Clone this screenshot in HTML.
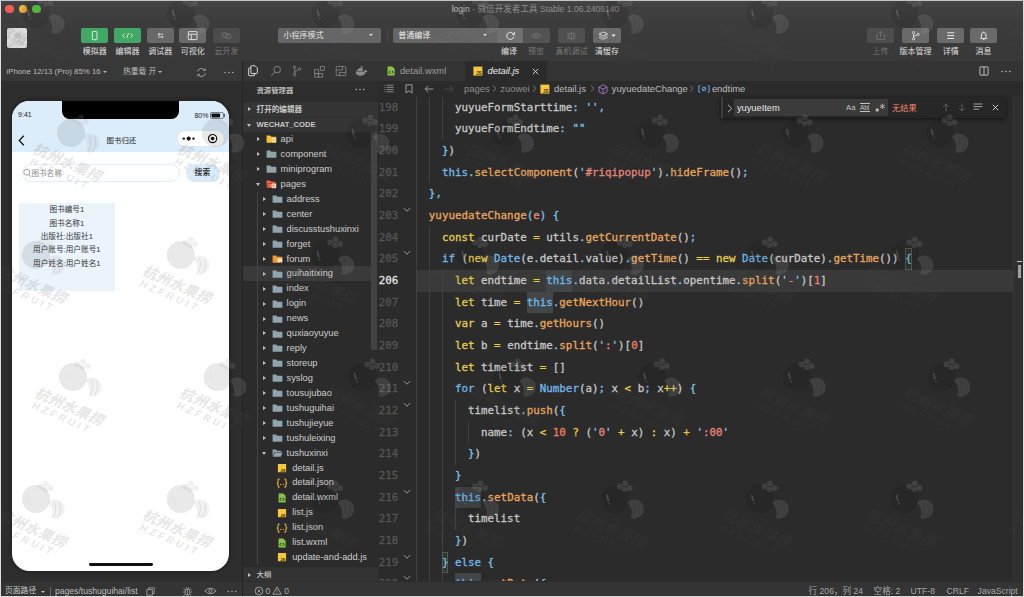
<!DOCTYPE html>
<html lang="zh-CN">
<head>
<meta charset="utf-8">
<title>login - 微信开发者工具 Stable 1.06.2409140</title>
<style>
*{box-sizing:border-box}
html,body{margin:0;padding:0;width:1024px;height:597px;overflow:hidden;background:#dedede;}
body:before{content:'';position:absolute;left:0;top:0;width:1024px;height:1px;background:#c4c4c4}
body{font-family:"Liberation Sans","Noto Sans CJK SC",sans-serif;color:#ccc;-webkit-font-smoothing:antialiased}
#win{position:absolute;left:1px;top:1px;width:1021.6px;height:594.7px;background:#2c2c2c;overflow:hidden}
.abs{position:absolute}
/* ---------- title + toolbar ---------- */
#tb{position:absolute;left:0;top:0;width:100%;height:60px;background:linear-gradient(#434343,#3b3b3b 45%,#383838)}
#title{position:absolute;left:0;top:1.2px;width:1069px;text-align:center;font-size:8.6px;color:#8e8e8e;letter-spacing:0}
.tl{position:absolute;top:3.7px;width:8.4px;height:8.4px;border-radius:50%}
.btn{position:absolute;top:26.7px;height:15.2px;width:27.3px;border-radius:2px;background:#6a6a6a}
.btn.g{background:#41a866}
.btn.d{background:#4c4c4c}
.btn svg{position:absolute;left:0;top:0;width:100%;height:100%}
.lbl{position:absolute;top:44.5px;width:60px;margin-left:-30px;text-align:center;font-size:8px;color:#e4e4e4;white-space:nowrap;line-height:12px}
.lbl.d{color:#7a7a7a}
.sel{position:absolute;top:26.7px;height:15.2px;border-radius:2px;background:#666;font-size:8px;color:#ececec;line-height:15.2px;padding-left:5.5px;white-space:nowrap}
.caret{position:absolute;width:0;height:0;border-left:2.2px solid transparent;border-right:2.2px solid transparent;border-top:2.6px solid #e0e0e0}
/* ---------- simulator ---------- */
#sim{position:absolute;left:0;top:60px;width:242px;height:535px;background:#2e2e2e}
#simhead{position:absolute;left:0;top:0;width:242px;height:20px;background:#383838;font-size:7.8px;color:#bcbcbc;line-height:21.4px;white-space:nowrap}
#simfoot{position:absolute;left:0;top:521.4px;width:242px;height:13.6px;background:#343434;font-size:7.8px;color:#c8c8c8;line-height:18.4px;overflow:hidden;white-space:nowrap}
#phone{position:absolute;left:10.8px;top:40.4px;width:217.6px;height:469.6px;border-radius:17.5px;background:#fff;overflow:hidden;box-shadow:0 0 5px 1px rgba(0,0,0,.35);color:#222}
#phone .nav{position:absolute;left:0;top:0;width:100%;height:50.5px;background:#dbecfa}
#phone .notch{position:absolute;left:50.2px;top:0;width:117px;height:17.8px;background:#000;border-radius:0 0 7.5px 7.5px}
.wm{position:absolute;white-space:nowrap;transform:rotate(23deg);transform-origin:0 0;font-weight:700;line-height:1;pointer-events:none}
/* ---------- sidebar ---------- */
#ed{position:absolute;left:242px;top:60px;width:780px;height:535px;background:#2c2c2c}
#edb{position:absolute;left:241.3px;top:60px;width:1px;height:535px;background:#232323}
#act{position:absolute;left:0;top:0;width:134.5px;height:20px;background:#343434}
#side{position:absolute;left:0;top:20px;width:134.5px;height:515px;background:#2d2d2d;overflow:hidden}
#side .hd{position:absolute;left:13.4px;top:4.2px;font-size:7.4px;line-height:11px;color:#d0d0d0;font-weight:500}
.row{position:absolute;left:0;width:134.5px;height:14.93px;font-size:9.28px;line-height:14.93px;color:#cfcfcf;white-space:nowrap}
.row.sec{font-size:7.6px;font-weight:700;color:#c8c8c8;background:#353535}
.row .tw{position:absolute;top:5.3px;width:0;height:0}
.tw.r{border-top:2.3px solid transparent;border-bottom:2.3px solid transparent;border-left:3px solid #c0c0c0}
.tw.dn{border-left:2.3px solid transparent;border-right:2.3px solid transparent;border-top:3px solid #c0c0c0;margin-top:1px;margin-left:-1px}
.row svg{position:absolute;top:2.4px}
.row span{position:absolute;top:0}
/* ---------- editor ---------- */
#tabs{position:absolute;left:134.5px;top:0;width:645.5px;height:20px;background:#343434}
.tab{position:absolute;top:0;height:20px;font-size:9.4px;line-height:20px;color:#9c9c9c;white-space:nowrap}
.tab.on{background:#2b2b2b;color:#f2f2f2;font-style:italic}
#bc{position:absolute;left:135.5px;top:20px;width:645.5px;height:16px;background:#2b2b2b;font-size:9.4px;line-height:15.4px;color:#8e8e8e;white-space:nowrap}
#bc span{position:absolute;top:0}
#bc .b{color:#bdbdbd}
#bc svg{position:absolute}
#code{position:absolute;left:134.5px;top:36px;width:645.5px;height:484.4px;background:#2b2b2b;overflow:hidden;font-family:"DejaVu Sans Mono","Liberation Mono","Noto Sans CJK SC",monospace;font-size:10.84px;-webkit-text-stroke:0.28px}
.ln{position:absolute;left:0;width:645.5px;height:21.66px;line-height:21.66px;white-space:pre;color:#c9c9c9}
.ln .no{position:absolute;left:0;width:20.9px;text-align:right;color:#565656}
.ln.cur .no{color:#e4e4e4}
.ln .tx{position:absolute;left:38.3px;top:0;letter-spacing:0.004px}
.ln .fd{position:absolute;left:25.3px;top:2px}
.ig{position:absolute;width:0.8px;background:#414141}
.k{color:#e6cf4e}.c{color:#72b9e8}.f{color:#e9a75e}.p{color:#7cc3ee}.s{color:#e8877a}.n{color:#ee7f6c}.o{color:#e8cf45}.t{color:#72b9e8}.e{color:#e38b7a}
.hl{display:inline-block;background:#434648}
.hl2{display:inline-block;background:#434648}
.bm{display:inline-block;box-shadow:inset 0 0 0 0.8px #5e645e;background:#2f382f}
#find{position:absolute;left:477.5px;top:36px;width:285px;height:21px;background:#262626;box-shadow:0 1px 4px rgba(0,0,0,.6);border-left:2px solid #3e3e3e}
#find svg{position:absolute}
#stat{position:absolute;left:0;top:520.8px;width:780px;height:14.2px;background:#343434;font-size:8.6px;line-height:18.2px;overflow:hidden;color:#a8a8a8;white-space:nowrap}
#stat span{position:absolute;top:0}
</style>
</head>
<body>
<div id="win">
<div id="tb">
  <div class="tl" style="left:4.2px;background:#ee5c54"></div>
  <div class="tl" style="left:17.8px;background:#f0b13a"></div>
  <div class="tl" style="left:31.4px;background:#5fc544"></div>
  <div id="title"><span style="color:#c2c2c2">login</span> - 微信开发者工具 Stable 1.06.2409140</div>
  <div class="abs" style="left:6px;top:27px;width:20px;height:20px;border-radius:2px;background:#dcdcdc;overflow:hidden"><svg class="abs" style="left:0;top:0" width="20" height="20" viewBox="0 0 20 20"><circle cx="10.4" cy="7.6" r="3.4" fill="#cfcfcf"/><path d="M3.6 17.4 Q4 11.6 10.4 11.6 Q16.8 11.6 17.2 17.4 Z" fill="#cfcfcf"/></svg></div>

  <div class="btn g" style="left:80.2px"><svg viewBox="0 0 27.3 15.2"><rect x="11.3" y="3.5" width="4.7" height="8.2" rx="0.8" fill="none" stroke="#e9f5ed" stroke-width="0.9"/></svg></div>
  <div class="btn g" style="left:113px"><svg viewBox="0 0 27.3 15.2"><path d="M10.6 5.6 L8.6 7.6 L10.6 9.6 M16.7 5.6 L18.7 7.6 L16.7 9.6 M14.6 5.2 L12.7 10" fill="none" stroke="#e9f5ed" stroke-width="0.9"/></svg></div>
  <div class="btn" style="left:145.5px"><svg viewBox="0 0 27.3 15.2"><path d="M11 6.3 H16.4 M11 9 H16.4" fill="none" stroke="#e8e8e8" stroke-width="0.9"/><path d="M12 5.2 v2.2 M15.4 7.9 v2.2" stroke="#e8e8e8" stroke-width="1.1"/></svg></div>
  <div class="btn" style="left:178.2px"><svg viewBox="0 0 27.3 15.2"><rect x="9.3" y="3.6" width="8.7" height="8" rx="0.6" fill="none" stroke="#e8e8e8" stroke-width="0.9"/><path d="M9.3 6.3 H18 M12.3 6.3 V11.6" stroke="#e8e8e8" stroke-width="0.9" fill="none"/></svg></div>
  <div class="btn d" style="left:211.8px"><svg viewBox="0 0 27.3 15.2"><ellipse cx="12" cy="7.2" rx="2.9" ry="2.5" fill="none" stroke="#777" stroke-width="0.8"/><ellipse cx="15.3" cy="8.2" rx="2.9" ry="2.4" fill="none" stroke="#777" stroke-width="0.8"/></svg></div>
  <div class="lbl" style="left:93.8px">模拟器</div>
  <div class="lbl" style="left:126.6px">编辑器</div>
  <div class="lbl" style="left:159.2px">调试器</div>
  <div class="lbl" style="left:191.8px">可视化</div>
  <div class="lbl d" style="left:225.5px">云开发</div>

  <div class="sel" style="left:277px;width:103px">小程序模式<div class="caret" style="left:90.5px;top:6.7px"></div></div>
  <div class="abs" style="left:385.5px;top:27px;width:1px;height:15px;background:#4a4a4a"></div>
  <div class="sel" style="left:391.7px;width:104px;border-radius:2px 0 0 2px">普通编译<div class="caret" style="left:90.5px;top:6.7px"></div></div>
  <div class="btn" style="left:495.7px;width:26.6px;border-radius:0;background:#707070"><svg viewBox="0 0 26.6 15.2"><path d="M16.6 6.2 A3.6 3.6 0 1 0 16.9 8.6" fill="none" stroke="#eee" stroke-width="0.9"/><path d="M17.6 4 V6.6 H15" fill="none" stroke="#eee" stroke-width="0.9"/></svg></div>
  <div class="btn d" style="left:522.3px;width:26.6px;border-radius:0 2px 2px 0;background:#535353"><svg viewBox="0 0 26.6 15.2"><path d="M8.3 7.6 Q13.3 2.8 18.3 7.6 Q13.3 12.4 8.3 7.6 Z" fill="none" stroke="#767676" stroke-width="0.8"/><circle cx="13.3" cy="7.6" r="1.5" fill="none" stroke="#767676" stroke-width="0.8"/></svg></div>
  <div class="btn d" style="left:557.2px;width:26.8px;background:#505050"><svg viewBox="0 0 26.8 15.2"><ellipse cx="13.4" cy="8" rx="2.6" ry="3.4" fill="none" stroke="#7a7a7a" stroke-width="0.8"/><path d="M13.4 4.8 V11.3 M8.6 8 H10.8 M16 8 H18.2 M9.4 4.6 L11.3 6.2 M17.4 4.6 L15.5 6.2 M9.4 11.4 L11.3 9.9 M17.4 11.4 L15.5 9.9" stroke="#7a7a7a" stroke-width="0.7" fill="none"/></svg></div>
  <div class="btn" style="left:592.4px;width:27.4px"><svg viewBox="0 0 27.4 15.2"><path d="M10.3 4 L6 5.9 L10.3 7.8 L14.6 5.9 Z M6 7.7 L10.3 9.6 L14.6 7.7 M6 9.5 L10.3 11.4 L14.6 9.5" fill="none" stroke="#eee" stroke-width="0.8" stroke-linejoin="round"/><path d="M18.6 6.6 h4 l-2 2.4 z" fill="#eee"/></svg></div>
  <div class="lbl" style="left:508px">编译</div>
  <div class="lbl d" style="left:535px">预览</div>
  <div class="lbl d" style="left:570.5px">真机调试</div>
  <div class="lbl" style="left:606px">清缓存</div>

  <div class="btn d" style="left:865.8px;background:#4d4d4d"><svg viewBox="0 0 27.3 15.2"><path d="M11 6.4 H9.8 V11.4 H17.5 V6.4 H16.3 M13.65 9.2 V3.4 M11.8 5.2 L13.65 3.3 L15.5 5.2" fill="none" stroke="#7a7a7a" stroke-width="0.8"/></svg></div>
  <div class="btn" style="left:901px"><svg viewBox="0 0 27.3 15.2"><circle cx="11.6" cy="4.6" r="1.1" fill="none" stroke="#eee" stroke-width="0.8"/><circle cx="11.6" cy="10.8" r="1.1" fill="none" stroke="#eee" stroke-width="0.8"/><circle cx="16.2" cy="6.4" r="1.1" fill="none" stroke="#eee" stroke-width="0.8"/><path d="M11.6 5.7 V9.7 M11.6 9.4 Q11.8 7.4 15.2 6.9" fill="none" stroke="#eee" stroke-width="0.8"/></svg></div>
  <div class="btn" style="left:936.1px"><svg viewBox="0 0 27.3 15.2"><path d="M10.2 4.8 H17.2 M10.2 7.6 H17.2 M10.2 10.4 H17.2" stroke="#eee" stroke-width="1"/></svg></div>
  <div class="btn" style="left:968.8px"><svg viewBox="0 0 27.3 15.2"><path d="M10.6 10.6 H16.8 L16 9.4 V6.8 A2.3 2.3 0 0 0 11.4 6.8 V9.4 Z" fill="none" stroke="#eee" stroke-width="0.9" stroke-linejoin="round"/><path d="M13 11.6 h1.4" stroke="#eee" stroke-width="0.9"/><path d="M13.7 3.4 v1" stroke="#eee" stroke-width="0.9"/></svg></div>
  <div class="lbl d" style="left:879.5px">上传</div>
  <div class="lbl" style="left:914.6px">版本管理</div>
  <div class="lbl" style="left:949.7px">详情</div>
  <div class="lbl" style="left:982.4px">消息</div>
</div>
<div id="sim">
  <div id="simhead">
    <span class="abs" style="left:5.5px">iPhone 12/13 (Pro) 85% 16</span>
    <div class="caret" style="left:101.6px;top:9.6px;border-top-color:#bbb"></div>
    <span class="abs" style="left:122px">热重载 开</span>
    <div class="caret" style="left:157px;top:9.6px;border-top-color:#bbb"></div>
    <svg class="abs" style="left:195.2px;top:5.6px" width="11" height="11" viewBox="0 0 11 11"><path d="M8.9 3.3 A4.1 4.1 0 0 0 1.5 4.6 M2.1 7.7 A4.1 4.1 0 0 0 9.5 6.4" fill="none" stroke="#b4b4b4" stroke-width="0.8"/><path d="M9.4 1.6 L9.1 3.6 L7.1 3.3 M1.6 9.4 L1.9 7.4 L3.9 7.7" fill="none" stroke="#b4b4b4" stroke-width="0.8"/></svg>
    <svg class="abs" style="left:223px;top:9.8px" width="10" height="3" viewBox="0 0 10 3"><circle cx="1.2" cy="1.5" r="0.75" fill="#b8b8b8"/><circle cx="5" cy="1.5" r="0.75" fill="#b8b8b8"/><circle cx="8.8" cy="1.5" r="0.75" fill="#b8b8b8"/></svg>
  </div>
  <div id="phone">
    <div class="nav"></div>
    <div class="notch"></div>
    <div class="abs" style="left:6.3px;top:8.6px;font-size:7px;line-height:9px;color:#222">9:41</div>
    <div class="abs" style="left:182.6px;top:9.5px;font-size:7px;line-height:9px;color:#222">80%</div>
    <svg class="abs" style="left:198.4px;top:10.5px" width="16" height="7" viewBox="0 0 16 7"><rect x="0.4" y="0.4" width="13" height="6.2" rx="1.6" fill="none" stroke="#555" stroke-width="0.8"/><rect x="1.5" y="1.5" width="8.6" height="4" rx="0.8" fill="#111"/><path d="M14.4 2.3 v2.4" stroke="#555" stroke-width="1.1" stroke-linecap="round"/></svg>
    <svg class="abs" style="left:5.8px;top:33.5px" width="7" height="11" viewBox="0 0 7 11"><path d="M5.8 0.8 L1.2 5.5 L5.8 10.2" fill="none" stroke="#111" stroke-width="1.25"/></svg>
    <div class="abs" style="left:0.8px;top:33.4px;width:217.6px;text-align:center;font-size:7.4px;line-height:11px;color:#222">图书归还</div>
    <div class="abs" style="left:165.6px;top:28.8px;width:48px;height:17px;border-radius:8.5px;background:#fff;border:0.6px solid #dfe6ec"></div>
    <svg class="abs" style="left:165.6px;top:28.8px" width="48" height="17" viewBox="0 0 48 17"><circle cx="6.8" cy="8.6" r="1.2" fill="#111"/><circle cx="11.65" cy="8.6" r="2.05" fill="#111"/><circle cx="16.5" cy="8.6" r="1.2" fill="#111"/><circle cx="35.6" cy="8.6" r="4.1" fill="none" stroke="#111" stroke-width="1.2"/><circle cx="35.6" cy="8.6" r="1.8" fill="#111"/></svg>
    <!-- search -->
    <div class="abs" style="left:10px;top:62.6px;width:158.4px;height:18px;border-radius:9px;border:0.8px solid #e2effb;background:#fff"></div>
    <svg class="abs" style="left:11.2px;top:66.6px" width="9" height="10" viewBox="0 0 8 9"><circle cx="3.4" cy="3.8" r="2.7" fill="none" stroke="#888" stroke-width="0.7"/><path d="M5.3 5.9 L7 7.9" stroke="#888" stroke-width="0.8"/></svg>
    <div class="abs" style="left:19.6px;top:66.2px;font-size:7.6px;line-height:11px;color:#8a8a8a">图书名称</div>
    <div class="abs" style="left:174.6px;top:62.8px;width:33.2px;height:17.6px;border-radius:9px;background:#d9ebf9;text-align:center;font-size:7.8px;line-height:17.6px;color:#222;font-weight:500;text-indent:-1.2px">搜索</div>
    <!-- card -->
    <div class="abs" style="left:7.2px;top:101.4px;width:96.3px;height:88.4px;background:#ebf3fb"></div>
    <div class="abs" style="left:6.5px;top:102px;width:97px;text-align:center;font-size:7.65px;line-height:13.3px;color:#333;white-space:nowrap">图书编号1<br>图书名称1<br>出版社:出版社1<br>用户账号:用户账号1<br>用户姓名:用户姓名1</div>
    <div class="abs" style="left:77px;top:461.4px;width:64.6px;height:2.8px;border-radius:1.4px;background:#111"></div>
  </div>
  <div id="simfoot">
    <span class="abs" style="left:4px">页面路径</span>
    <div class="caret" style="left:39.5px;top:8.2px;border-top-color:#bbb"></div>
    <div class="abs" style="left:48.6px;top:4.5px;width:0.8px;height:9.5px;background:#666"></div>
    <span class="abs" style="left:54px;color:#bdbdbd;font-size:8.6px">pages/tushuguihai/list</span>
    <svg class="abs" style="left:144.5px;top:4.8px" width="9" height="9" viewBox="0 0 9 9"><path d="M2.6 2.6 V0.8 H8.2 V6.4 H6.4 M0.8 2.6 H6.4 V8.2 H0.8 Z" fill="none" stroke="#aaa" stroke-width="0.8"/></svg>
    <svg class="abs" style="left:180px;top:3.4px" width="13" height="11" viewBox="0 0 13 11"><ellipse cx="6.5" cy="6" rx="2.5" ry="3.3" fill="none" stroke="#b0b0b0" stroke-width="0.8"/><path d="M6.5 3 V9.2 M1.8 6 H4 M9 6 H11.2 M2.6 2.6 L4.6 4.2 M10.4 2.6 L8.4 4.2 M2.6 9.6 L4.6 8 M10.4 9.6 L8.4 8 M5 1.2 L5.8 2.6 M8 1.2 L7.2 2.6" stroke="#b0b0b0" stroke-width="0.7" fill="none"/></svg>
    <svg class="abs" style="left:203px;top:5px" width="13" height="8" viewBox="0 0 13 8"><path d="M0.8 4 Q6.5 -1.6 12.2 4 Q6.5 9.6 0.8 4 Z" fill="none" stroke="#b0b0b0" stroke-width="0.8"/><circle cx="6.5" cy="4" r="1.6" fill="none" stroke="#b0b0b0" stroke-width="0.8"/></svg>
    <svg class="abs" style="left:225.5px;top:7.8px" width="10" height="3" viewBox="0 0 10 3"><circle cx="1.2" cy="1.5" r="0.75" fill="#b8b8b8"/><circle cx="5" cy="1.5" r="0.75" fill="#b8b8b8"/><circle cx="8.8" cy="1.5" r="0.75" fill="#b8b8b8"/></svg>
  </div>
</div>
<div id="edb"></div><div id="ed">
<div id="act">
<svg class="abs" style="left:4.4px;top:4px" width="12" height="12" viewBox="0 0 13 13"><path d="M4.2 3 V1.4 Q4.2 0.8 4.8 0.8 H8.6 L11.2 3.4 V8.6 Q11.2 9.2 10.6 9.2 H4.8 Q4.2 9.2 4.2 8.6 Z" fill="none" stroke="#e6e6e6" stroke-width="1"/><path d="M4.2 3.2 H2.4 Q1.8 3.2 1.8 3.8 V11 Q1.8 11.6 2.4 11.6 H7.6 Q8.2 11.6 8.2 11 V9.4" fill="none" stroke="#e6e6e6" stroke-width="1"/></svg>
<svg class="abs" style="left:26.5px;top:4px" width="12" height="12" viewBox="0 0 12 12"><circle cx="7.2" cy="4.6" r="3.3" fill="none" stroke="#8c8c8c" stroke-width="0.9"/><path d="M4.9 7 L1.2 10.8" stroke="#8c8c8c" stroke-width="0.9"/></svg>
<svg class="abs" style="left:47.5px;top:4px" width="12" height="12" viewBox="0 0 12 12"><circle cx="3.6" cy="2.2" r="1.2" fill="none" stroke="#8c8c8c" stroke-width="0.8"/><circle cx="3.6" cy="9.8" r="1.2" fill="none" stroke="#8c8c8c" stroke-width="0.8"/><circle cx="8.6" cy="4" r="1.2" fill="none" stroke="#8c8c8c" stroke-width="0.8"/><path d="M3.6 3.4 V8.6 M3.6 8.2 Q3.8 6 7.5 4.6" fill="none" stroke="#8c8c8c" stroke-width="0.8"/></svg>
<svg class="abs" style="left:69.5px;top:3.5px" width="13" height="13" viewBox="0 0 13 13"><path d="M1.6 4.6 H5.6 V8.6 H1.6 Z M1.6 8.6 H5.6 V12.2 H1.6 Z M5.6 8.6 H9.6 V12.2 H5.6 Z M7.4 1.4 H11.4 V5.4 H7.4 Z" fill="none" stroke="#8c8c8c" stroke-width="0.8" stroke-linejoin="round"/></svg>
<svg class="abs" style="left:92px;top:4px" width="12" height="12" viewBox="0 0 12 12"><rect x="1.2" y="1.4" width="9.6" height="9.2" rx="1" fill="none" stroke="#8c8c8c" stroke-width="0.8"/><path d="M1.2 5 H7.4 V1.4 M4.4 10.6 V7.6 H10.8" fill="none" stroke="#8c8c8c" stroke-width="0.8"/></svg>
<svg class="abs" style="left:112px;top:4.5px" width="13" height="11" viewBox="0 0 13 11"><path d="M0.6 5.4 H9.4 Q9.3 4 10.2 3.2 Q11 3.8 11 4.8 Q11.9 4.5 12.6 5 Q12.2 6.2 10.6 6.2 Q9.4 9.8 5.4 9.8 Q1.2 9.8 0.6 5.4 Z" fill="#8c8c8c"/><path d="M2 3.6 h5.6 v1.5 h-5.6 z M3.8 1.9 h3.8 v1.5 h-3.8 z M5.7 0.3 h1.9 v1.4 h-1.9 z" fill="#8c8c8c"/></svg>
</div>
<div id="side">
<div class="hd">资源管理器</div>
<svg class="abs" style="left:112px;top:7.4px" width="10" height="3" viewBox="0 0 10 3"><circle cx="1.2" cy="1.5" r="0.75" fill="#c8c8c8"/><circle cx="5" cy="1.5" r="0.75" fill="#c8c8c8"/><circle cx="8.8" cy="1.5" r="0.75" fill="#c8c8c8"/></svg>
<div class="abs" style="left:0;top:51.06px;width:134.5px;height:438.97px;background:#2b2b2b"></div>
<div class="abs" style="left:0;top:185.43px;width:128px;height:14.93px;background:#3a3a3a"></div>
<div class="abs" style="left:14.2px;top:110.78px;width:0.8px;height:373.25px;background:#454545"></div>
<div class="row sec" style="top:21.20px"><i class="tw r" style="left:5.2px"></i><span style="left:13.6px;top:0.9px">打开的编辑器</span></div>
<div class="row sec" style="top:36.13px;border-top:0.8px solid #303030"><i class="tw dn" style="left:5.2px"></i><span style="left:13.6px">WECHAT_CODE</span></div>
<div class="row" style="top:51.06px"><i class="tw r" style="left:14.4px"></i><svg style="left:23.2px" width="11" height="10" viewBox="0 0 11 10"><path d="M0.6 1.6 h3.6 l1 1.1 h4.6 q0.6 0 0.6 0.6 v4.9 q0 0.6 -0.6 0.6 h-8.6 q-0.6 0 -0.6 -0.6 Z" fill="#f6c33b"/><path d="M6.2 4.6 h3.6 v3.6 h-3.6 z" fill="#fff8e1"/><path d="M7 5.2 v2.4 M9 5.2 v2.4 M6.6 6.4 h2.8" stroke="#c79a1a" stroke-width="0.5"/></svg><span style="left:37.6px">api</span></div>
<div class="row" style="top:65.99px"><i class="tw r" style="left:14.4px"></i><svg style="left:23.2px" width="11" height="10" viewBox="0 0 11 10"><path d="M0.6 1.6 h3.6 l1 1.1 h4.6 q0.6 0 0.6 0.6 v4.9 q0 0.6 -0.6 0.6 h-8.6 q-0.6 0 -0.6 -0.6 Z" fill="#90a4ae"/></svg><span style="left:37.6px">component</span></div>
<div class="row" style="top:80.92px"><i class="tw r" style="left:14.4px"></i><svg style="left:23.2px" width="11" height="10" viewBox="0 0 11 10"><path d="M0.6 1.6 h3.6 l1 1.1 h4.6 q0.6 0 0.6 0.6 v4.9 q0 0.6 -0.6 0.6 h-8.6 q-0.6 0 -0.6 -0.6 Z" fill="#90a4ae"/></svg><span style="left:37.6px">miniprogram</span></div>
<div class="row" style="top:95.85px"><i class="tw dn" style="left:14.4px"></i><svg style="left:23.2px" width="11" height="10" viewBox="0 0 11 10"><path d="M0.6 1.6 h3.4 l1 1.1 h4.2 v1.2 H2.6 L0.6 8.6 Z" fill="#f4673c"/><path d="M2.9 4.4 H10.6 L8.8 8.8 H0.9 Z" fill="#f4673c"/><rect x="5.6" y="4.6" width="4.6" height="4.6" rx="0.8" fill="#ffe0d6"/><path d="M6.6 6 h2.6 M6.6 7.2 h2.6 M6.6 8.3 h1.6" stroke="#e64a19" stroke-width="0.5"/></svg><span style="left:37.6px">pages</span></div>
<div class="row" style="top:110.78px"><i class="tw r" style="left:20.2px"></i><svg style="left:28.6px" width="11" height="10" viewBox="0 0 11 10"><path d="M0.6 1.6 h3.6 l1 1.1 h4.6 q0.6 0 0.6 0.6 v4.9 q0 0.6 -0.6 0.6 h-8.6 q-0.6 0 -0.6 -0.6 Z" fill="#90a4ae"/></svg><span style="left:43.6px">address</span></div>
<div class="row" style="top:125.71px"><i class="tw r" style="left:20.2px"></i><svg style="left:28.6px" width="11" height="10" viewBox="0 0 11 10"><path d="M0.6 1.6 h3.6 l1 1.1 h4.6 q0.6 0 0.6 0.6 v4.9 q0 0.6 -0.6 0.6 h-8.6 q-0.6 0 -0.6 -0.6 Z" fill="#90a4ae"/></svg><span style="left:43.6px">center</span></div>
<div class="row" style="top:140.64px"><i class="tw r" style="left:20.2px"></i><svg style="left:28.6px" width="11" height="10" viewBox="0 0 11 10"><path d="M0.6 1.6 h3.6 l1 1.1 h4.6 q0.6 0 0.6 0.6 v4.9 q0 0.6 -0.6 0.6 h-8.6 q-0.6 0 -0.6 -0.6 Z" fill="#90a4ae"/></svg><span style="left:43.6px">discusstushuxinxi</span></div>
<div class="row" style="top:155.57px"><i class="tw r" style="left:20.2px"></i><svg style="left:28.6px" width="11" height="10" viewBox="0 0 11 10"><path d="M0.6 1.6 h3.6 l1 1.1 h4.6 q0.6 0 0.6 0.6 v4.9 q0 0.6 -0.6 0.6 h-8.6 q-0.6 0 -0.6 -0.6 Z" fill="#90a4ae"/></svg><span style="left:43.6px">forget</span></div>
<div class="row" style="top:170.50px"><i class="tw r" style="left:20.2px"></i><svg style="left:28.6px" width="11" height="10" viewBox="0 0 11 10"><path d="M0.6 1.6 h3.6 l1 1.1 h4.6 q0.6 0 0.6 0.6 v4.9 q0 0.6 -0.6 0.6 h-8.6 q-0.6 0 -0.6 -0.6 Z" fill="#f29a2e"/><path d="M5.4 4.4 h4.8 v3.4 h-2.6 l-1.2 1.2 v-1.2 h-1 z" fill="#ffe8cc"/></svg><span style="left:43.6px">forum</span></div>
<div class="row" style="top:185.43px"><i class="tw r" style="left:20.2px"></i><svg style="left:28.6px" width="11" height="10" viewBox="0 0 11 10"><path d="M0.6 1.6 h3.6 l1 1.1 h4.6 q0.6 0 0.6 0.6 v4.9 q0 0.6 -0.6 0.6 h-8.6 q-0.6 0 -0.6 -0.6 Z" fill="#90a4ae"/></svg><span style="left:43.6px">guihaitixing</span></div>
<div class="row" style="top:200.36px"><i class="tw r" style="left:20.2px"></i><svg style="left:28.6px" width="11" height="10" viewBox="0 0 11 10"><path d="M0.6 1.6 h3.6 l1 1.1 h4.6 q0.6 0 0.6 0.6 v4.9 q0 0.6 -0.6 0.6 h-8.6 q-0.6 0 -0.6 -0.6 Z" fill="#90a4ae"/></svg><span style="left:43.6px">index</span></div>
<div class="row" style="top:215.29px"><i class="tw r" style="left:20.2px"></i><svg style="left:28.6px" width="11" height="10" viewBox="0 0 11 10"><path d="M0.6 1.6 h3.6 l1 1.1 h4.6 q0.6 0 0.6 0.6 v4.9 q0 0.6 -0.6 0.6 h-8.6 q-0.6 0 -0.6 -0.6 Z" fill="#90a4ae"/></svg><span style="left:43.6px">login</span></div>
<div class="row" style="top:230.22px"><i class="tw r" style="left:20.2px"></i><svg style="left:28.6px" width="11" height="10" viewBox="0 0 11 10"><path d="M0.6 1.6 h3.6 l1 1.1 h4.6 q0.6 0 0.6 0.6 v4.9 q0 0.6 -0.6 0.6 h-8.6 q-0.6 0 -0.6 -0.6 Z" fill="#90a4ae"/></svg><span style="left:43.6px">news</span></div>
<div class="row" style="top:245.15px"><i class="tw r" style="left:20.2px"></i><svg style="left:28.6px" width="11" height="10" viewBox="0 0 11 10"><path d="M0.6 1.6 h3.6 l1 1.1 h4.6 q0.6 0 0.6 0.6 v4.9 q0 0.6 -0.6 0.6 h-8.6 q-0.6 0 -0.6 -0.6 Z" fill="#90a4ae"/></svg><span style="left:43.6px">quxiaoyuyue</span></div>
<div class="row" style="top:260.08px"><i class="tw r" style="left:20.2px"></i><svg style="left:28.6px" width="11" height="10" viewBox="0 0 11 10"><path d="M0.6 1.6 h3.6 l1 1.1 h4.6 q0.6 0 0.6 0.6 v4.9 q0 0.6 -0.6 0.6 h-8.6 q-0.6 0 -0.6 -0.6 Z" fill="#90a4ae"/></svg><span style="left:43.6px">reply</span></div>
<div class="row" style="top:275.01px"><i class="tw r" style="left:20.2px"></i><svg style="left:28.6px" width="11" height="10" viewBox="0 0 11 10"><path d="M0.6 1.6 h3.6 l1 1.1 h4.6 q0.6 0 0.6 0.6 v4.9 q0 0.6 -0.6 0.6 h-8.6 q-0.6 0 -0.6 -0.6 Z" fill="#90a4ae"/></svg><span style="left:43.6px">storeup</span></div>
<div class="row" style="top:289.94px"><i class="tw r" style="left:20.2px"></i><svg style="left:28.6px" width="11" height="10" viewBox="0 0 11 10"><path d="M0.6 1.6 h3.6 l1 1.1 h4.6 q0.6 0 0.6 0.6 v4.9 q0 0.6 -0.6 0.6 h-8.6 q-0.6 0 -0.6 -0.6 Z" fill="#90a4ae"/></svg><span style="left:43.6px">syslog</span></div>
<div class="row" style="top:304.87px"><i class="tw r" style="left:20.2px"></i><svg style="left:28.6px" width="11" height="10" viewBox="0 0 11 10"><path d="M0.6 1.6 h3.6 l1 1.1 h4.6 q0.6 0 0.6 0.6 v4.9 q0 0.6 -0.6 0.6 h-8.6 q-0.6 0 -0.6 -0.6 Z" fill="#90a4ae"/></svg><span style="left:43.6px">tousujubao</span></div>
<div class="row" style="top:319.80px"><i class="tw r" style="left:20.2px"></i><svg style="left:28.6px" width="11" height="10" viewBox="0 0 11 10"><path d="M0.6 1.6 h3.6 l1 1.1 h4.6 q0.6 0 0.6 0.6 v4.9 q0 0.6 -0.6 0.6 h-8.6 q-0.6 0 -0.6 -0.6 Z" fill="#90a4ae"/></svg><span style="left:43.6px">tushuguihai</span></div>
<div class="row" style="top:334.73px"><i class="tw r" style="left:20.2px"></i><svg style="left:28.6px" width="11" height="10" viewBox="0 0 11 10"><path d="M0.6 1.6 h3.6 l1 1.1 h4.6 q0.6 0 0.6 0.6 v4.9 q0 0.6 -0.6 0.6 h-8.6 q-0.6 0 -0.6 -0.6 Z" fill="#90a4ae"/></svg><span style="left:43.6px">tushujieyue</span></div>
<div class="row" style="top:349.66px"><i class="tw r" style="left:20.2px"></i><svg style="left:28.6px" width="11" height="10" viewBox="0 0 11 10"><path d="M0.6 1.6 h3.6 l1 1.1 h4.6 q0.6 0 0.6 0.6 v4.9 q0 0.6 -0.6 0.6 h-8.6 q-0.6 0 -0.6 -0.6 Z" fill="#90a4ae"/></svg><span style="left:43.6px">tushuleixing</span></div>
<div class="row" style="top:364.59px"><i class="tw dn" style="left:20.2px"></i><svg style="left:28.6px" width="11" height="10" viewBox="0 0 11 10"><path d="M0.6 1.6 h3.4 l1 1.1 h4.2 v1.2 H2.6 L0.6 8.6 Z" fill="#90a4ae"/><path d="M2.9 4.4 H10.6 L8.8 8.8 H0.9 Z" fill="#90a4ae"/></svg><span style="left:43.6px">tushuxinxi</span></div>
<div class="row" style="top:379.52px"><svg style="left:34.0px" width="10" height="10" viewBox="0 0 10 10"><rect x="0.9" y="1" width="8.2" height="8.2" fill="#f5c73d"/><text x="8.5" y="8.5" font-size="4.3" font-weight="700" font-family="Liberation Sans,sans-serif" fill="#3a3210" text-anchor="end">JS</text></svg><span style="left:49.2px">detail.js</span></div>
<div class="row" style="top:394.45px"><svg style="left:32.8px" width="12" height="10" viewBox="0 0 12 10"><path d="M3.6 0.9 H3 Q2.1 0.9 2.1 1.9 V3.6 Q2.1 4.9 0.8 5 Q2.1 5.1 2.1 6.4 V8.1 Q2.1 9.1 3 9.1 H3.6 M8.4 0.9 H9 Q9.9 0.9 9.9 1.9 V3.6 Q9.9 4.9 11.2 5 Q9.9 5.1 9.9 6.4 V8.1 Q9.9 9.1 9 9.1 H8.4" fill="none" stroke="#f3b941" stroke-width="1.05"/><circle cx="4.7" cy="6.4" r="0.6" fill="#f3b941"/><circle cx="7.3" cy="6.4" r="0.6" fill="#f3b941"/></svg><span style="left:49.2px">detail.json</span></div>
<div class="row" style="top:409.38px"><svg style="left:34.0px" width="10" height="10" viewBox="0 0 10 10"><path d="M1.6 0.4 H6.2 L8.6 2.8 V9.6 H1.6 Z" fill="#8bc34a"/><path d="M4.3 4.8 L3 6.3 L4.3 7.8 M5.9 4.8 L7.2 6.3 L5.9 7.8" fill="none" stroke="#1b3606" stroke-width="1"/></svg><span style="left:49.2px">detail.wxml</span></div>
<div class="row" style="top:424.31px"><svg style="left:34.0px" width="10" height="10" viewBox="0 0 10 10"><rect x="0.9" y="1" width="8.2" height="8.2" fill="#f5c73d"/><text x="8.5" y="8.5" font-size="4.3" font-weight="700" font-family="Liberation Sans,sans-serif" fill="#3a3210" text-anchor="end">JS</text></svg><span style="left:49.2px">list.js</span></div>
<div class="row" style="top:439.24px"><svg style="left:32.8px" width="12" height="10" viewBox="0 0 12 10"><path d="M3.6 0.9 H3 Q2.1 0.9 2.1 1.9 V3.6 Q2.1 4.9 0.8 5 Q2.1 5.1 2.1 6.4 V8.1 Q2.1 9.1 3 9.1 H3.6 M8.4 0.9 H9 Q9.9 0.9 9.9 1.9 V3.6 Q9.9 4.9 11.2 5 Q9.9 5.1 9.9 6.4 V8.1 Q9.9 9.1 9 9.1 H8.4" fill="none" stroke="#f3b941" stroke-width="1.05"/><circle cx="4.7" cy="6.4" r="0.6" fill="#f3b941"/><circle cx="7.3" cy="6.4" r="0.6" fill="#f3b941"/></svg><span style="left:49.2px">list.json</span></div>
<div class="row" style="top:454.17px"><svg style="left:34.0px" width="10" height="10" viewBox="0 0 10 10"><path d="M1.6 0.4 H6.2 L8.6 2.8 V9.6 H1.6 Z" fill="#8bc34a"/><path d="M4.3 4.8 L3 6.3 L4.3 7.8 M5.9 4.8 L7.2 6.3 L5.9 7.8" fill="none" stroke="#1b3606" stroke-width="1"/></svg><span style="left:49.2px">list.wxml</span></div>
<div class="row" style="top:469.10px"><svg style="left:34.0px" width="10" height="10" viewBox="0 0 10 10"><rect x="0.9" y="1" width="8.2" height="8.2" fill="#f5c73d"/><text x="8.5" y="8.5" font-size="4.3" font-weight="700" font-family="Liberation Sans,sans-serif" fill="#3a3210" text-anchor="end">JS</text></svg><span style="left:49.2px">update-and-add.js</span></div>
<div class="abs" style="left:128.3px;top:50.5px;width:6.2px;height:218px;background:#424242"></div>
<div class="row sec" style="top:485.6px;height:14.6px;line-height:14.6px;border-top:0.8px solid #303030;background:#333"><i class="tw r" style="left:5.2px"></i><span style="left:13.6px;font-weight:500;font-size:7.4px">大纲</span></div>
</div>
<div id="tabs">
  <div class="tab" style="left:0;width:87.4px"><svg class="abs" style="left:8.6px;top:5px" width="10" height="10" viewBox="0 0 10 10"><path d="M1.6 0.4 H6.2 L8.6 2.8 V9.6 H1.6 Z" fill="#8bc34a"/><path d="M4.3 4.8 L3 6.3 L4.3 7.8 M5.9 4.8 L7.2 6.3 L5.9 7.8" fill="none" stroke="#1b3606" stroke-width="1"/></svg><span class="abs" style="left:22.4px">detail.wxml</span></div>
  <div class="tab on" style="left:87.4px;width:82.6px"><svg class="abs" style="left:8px;top:5px" width="10" height="10" viewBox="0 0 10 10"><rect x="0.4" y="0.6" width="9" height="9" fill="#f5c73d"/><text x="8.6" y="8.7" font-size="4.6" font-weight="700" font-family="Liberation Sans,sans-serif" fill="#3a3210" text-anchor="end" font-style="normal">JS</text></svg><span class="abs" style="left:22.6px">detail.js</span><svg class="abs" style="left:67.4px;top:6.6px" width="7" height="7" viewBox="0 0 7 7"><path d="M0.8 0.8 L6.2 6.2 M6.2 0.8 L0.8 6.2" stroke="#e8e8e8" stroke-width="0.9"/></svg></div>
  <svg class="abs" style="left:601px;top:5.4px" width="10" height="10" viewBox="0 0 10 10"><rect x="0.9" y="0.9" width="8.2" height="8.2" rx="0.6" fill="none" stroke="#d0d0d0" stroke-width="0.9"/><path d="M5 0.9 V9.1" stroke="#d0d0d0" stroke-width="0.9"/></svg>
  <svg class="abs" style="left:623.5px;top:8.6px" width="10" height="3" viewBox="0 0 10 3"><circle cx="1.2" cy="1.5" r="0.75" fill="#c8c8c8"/><circle cx="5" cy="1.5" r="0.75" fill="#c8c8c8"/><circle cx="8.8" cy="1.5" r="0.75" fill="#c8c8c8"/></svg>
</div>
<div id="bc">
  <svg style="left:5.2px;top:3.4px" width="10" height="9" viewBox="0 0 10 9"><path d="M2.6 1.2 H9.6 M2.6 3.4 H9.6 M2.6 5.6 H9.6 M2.6 7.8 H9.6" stroke="#a0a0a0" stroke-width="0.8"/><path d="M0.4 1.2 H1.4 M0.4 3.4 H1.4 M0.4 5.6 H1.4 M0.4 7.8 H1.4" stroke="#a0a0a0" stroke-width="0.8"/></svg>
  <svg style="left:26.6px;top:3px" width="8" height="10" viewBox="0 0 8 10"><path d="M1 0.8 H7 V9 L4 6.8 L1 9 Z" fill="none" stroke="#a8a8a8" stroke-width="0.9" stroke-linejoin="round"/></svg>
  <svg style="left:45.6px;top:3.6px" width="10" height="8" viewBox="0 0 10 8"><path d="M9.2 4 H1.2 M4.4 0.8 L1.2 4 L4.4 7.2" fill="none" stroke="#a8a8a8" stroke-width="0.9"/></svg>
  <svg style="left:65.2px;top:3.6px" width="10" height="8" viewBox="0 0 10 8"><path d="M0.8 4 H8.8 M5.6 0.8 L8.8 4 L5.6 7.2" fill="none" stroke="#4c4c4c" stroke-width="0.9"/></svg>
  <span style="left:85.6px">pages</span>
  <svg style="left:113.6px;top:4.4px" width="5" height="7" viewBox="0 0 5 7"><path d="M1 0.6 L4 3.5 L1 6.4" fill="none" stroke="#8a8a8a" stroke-width="0.8"/></svg>
  <span style="left:121.8px">zuowei</span>
  <svg style="left:153.4px;top:4.4px" width="5" height="7" viewBox="0 0 5 7"><path d="M1 0.6 L4 3.5 L1 6.4" fill="none" stroke="#8a8a8a" stroke-width="0.8"/></svg>
  <svg style="left:161.8px;top:3px" width="10" height="10" viewBox="0 0 10 10"><rect x="0.4" y="0.6" width="9" height="9" fill="#f5c73d"/><text x="8.6" y="8.7" font-size="4.6" font-weight="700" font-family="Liberation Sans,sans-serif" fill="#3a3210" text-anchor="end">JS</text></svg>
  <span class="b" style="left:175.6px">detail.js</span>
  <svg style="left:211.4px;top:4.4px" width="5" height="7" viewBox="0 0 5 7"><path d="M1 0.6 L4 3.5 L1 6.4" fill="none" stroke="#8a8a8a" stroke-width="0.8"/></svg>
  <svg style="left:219px;top:2.6px" width="10" height="11" viewBox="0 0 10 11"><path d="M5 0.8 L9 3 V7.8 L5 10 L1 7.8 V3 Z M1 3 L5 5.2 L9 3 M5 5.2 V10" fill="none" stroke="#b180d7" stroke-width="0.8" stroke-linejoin="round"/></svg>
  <span class="b" style="left:233.2px">yuyuedateChange</span>
  <svg style="left:310.8px;top:4.4px" width="5" height="7" viewBox="0 0 5 7"><path d="M1 0.6 L4 3.5 L1 6.4" fill="none" stroke="#8a8a8a" stroke-width="0.8"/></svg>
  <svg style="left:319.6px;top:4px" width="12" height="8" viewBox="0 0 12 8"><path d="M2.4 0.8 H0.8 V7.2 H2.4 M9.6 0.8 H11.2 V7.2 H9.6" fill="none" stroke="#75beff" stroke-width="0.8"/><circle cx="6" cy="4" r="1.9" fill="none" stroke="#75beff" stroke-width="0.8"/><path d="M4.4 5.6 L7.6 2.4" stroke="#75beff" stroke-width="0.6"/></svg>
  <span class="b" style="left:333.4px">endtime</span>
</div>
<div id="code">
<div class="abs" style="left:38px;top:172.93px;width:597.5px;height:21.66px;background:#393939"></div>
<div class="ig" style="left:38.60px;top:-0.35px;height:21.66px"></div>
<div class="ig" style="left:51.66px;top:-0.35px;height:21.66px"></div>
<div class="ig" style="left:64.72px;top:-0.35px;height:21.66px"></div>
<div class="ig" style="left:38.60px;top:21.31px;height:21.66px"></div>
<div class="ig" style="left:51.66px;top:21.31px;height:21.66px"></div>
<div class="ig" style="left:64.72px;top:21.31px;height:21.66px"></div>
<div class="ig" style="left:38.60px;top:42.97px;height:21.66px"></div>
<div class="ig" style="left:51.66px;top:42.97px;height:21.66px"></div>
<div class="ig" style="left:38.60px;top:64.63px;height:21.66px"></div>
<div class="ig" style="left:51.66px;top:64.63px;height:21.66px"></div>
<div class="ig" style="left:38.60px;top:86.29px;height:21.66px"></div>
<div class="ig" style="left:38.60px;top:107.95px;height:21.66px"></div>
<div class="ig" style="left:38.60px;top:129.61px;height:21.66px"></div>
<div class="ig" style="left:51.66px;top:129.61px;height:21.66px"></div>
<div class="ig" style="left:38.60px;top:151.27px;height:21.66px"></div>
<div class="ig" style="left:51.66px;top:151.27px;height:21.66px"></div>
<div class="ig" style="left:38.60px;top:172.93px;height:21.66px"></div>
<div class="ig" style="left:51.66px;top:172.93px;height:21.66px"></div>
<div class="ig" style="left:64.72px;top:172.93px;height:21.66px"></div>
<div class="ig" style="left:38.60px;top:194.59px;height:21.66px"></div>
<div class="ig" style="left:51.66px;top:194.59px;height:21.66px"></div>
<div class="ig" style="left:64.72px;top:194.59px;height:21.66px"></div>
<div class="ig" style="left:38.60px;top:216.25px;height:21.66px"></div>
<div class="ig" style="left:51.66px;top:216.25px;height:21.66px"></div>
<div class="ig" style="left:64.72px;top:216.25px;height:21.66px"></div>
<div class="ig" style="left:38.60px;top:237.91px;height:21.66px"></div>
<div class="ig" style="left:51.66px;top:237.91px;height:21.66px"></div>
<div class="ig" style="left:64.72px;top:237.91px;height:21.66px"></div>
<div class="ig" style="left:38.60px;top:259.57px;height:21.66px"></div>
<div class="ig" style="left:51.66px;top:259.57px;height:21.66px"></div>
<div class="ig" style="left:64.72px;top:259.57px;height:21.66px"></div>
<div class="ig" style="left:38.60px;top:281.23px;height:21.66px"></div>
<div class="ig" style="left:51.66px;top:281.23px;height:21.66px"></div>
<div class="ig" style="left:64.72px;top:281.23px;height:21.66px"></div>
<div class="ig" style="left:38.60px;top:302.89px;height:21.66px"></div>
<div class="ig" style="left:51.66px;top:302.89px;height:21.66px"></div>
<div class="ig" style="left:64.72px;top:302.89px;height:21.66px"></div>
<div class="ig" style="left:77.78px;top:302.89px;height:21.66px"></div>
<div class="ig" style="left:38.60px;top:324.55px;height:21.66px"></div>
<div class="ig" style="left:51.66px;top:324.55px;height:21.66px"></div>
<div class="ig" style="left:64.72px;top:324.55px;height:21.66px"></div>
<div class="ig" style="left:77.78px;top:324.55px;height:21.66px"></div>
<div class="ig" style="left:90.84px;top:324.55px;height:21.66px"></div>
<div class="ig" style="left:38.60px;top:346.21px;height:21.66px"></div>
<div class="ig" style="left:51.66px;top:346.21px;height:21.66px"></div>
<div class="ig" style="left:64.72px;top:346.21px;height:21.66px"></div>
<div class="ig" style="left:77.78px;top:346.21px;height:21.66px"></div>
<div class="ig" style="left:38.60px;top:367.87px;height:21.66px"></div>
<div class="ig" style="left:51.66px;top:367.87px;height:21.66px"></div>
<div class="ig" style="left:64.72px;top:367.87px;height:21.66px"></div>
<div class="ig" style="left:38.60px;top:389.53px;height:21.66px"></div>
<div class="ig" style="left:51.66px;top:389.53px;height:21.66px"></div>
<div class="ig" style="left:64.72px;top:389.53px;height:21.66px"></div>
<div class="ig" style="left:38.60px;top:411.19px;height:21.66px"></div>
<div class="ig" style="left:51.66px;top:411.19px;height:21.66px"></div>
<div class="ig" style="left:64.72px;top:411.19px;height:21.66px"></div>
<div class="ig" style="left:77.78px;top:411.19px;height:21.66px"></div>
<div class="ig" style="left:38.60px;top:432.85px;height:21.66px"></div>
<div class="ig" style="left:51.66px;top:432.85px;height:21.66px"></div>
<div class="ig" style="left:64.72px;top:432.85px;height:21.66px"></div>
<div class="ig" style="left:38.60px;top:454.51px;height:21.66px"></div>
<div class="ig" style="left:51.66px;top:454.51px;height:21.66px"></div>
<div class="ig" style="left:38.60px;top:476.17px;height:21.66px"></div>
<div class="ig" style="left:51.66px;top:476.17px;height:21.66px"></div>
<div class="ig" style="left:64.72px;top:476.17px;height:21.66px"></div>
<div class="ln" style="top:-0.35px"><span class="no">198</span><span class="tx">      yuyueFormStarttime<span class="p">:</span> <span class="p">'</span><span class="p">'</span><span class="p">,</span></span></div>
<div class="ln" style="top:21.31px"><span class="no">199</span><span class="tx">      yuyueFormEndtime<span class="p">:</span> <span class="p">"</span><span class="p">"</span></span></div>
<div class="ln" style="top:42.97px"><span class="no">200</span><span class="tx">    <span class="p">}</span>)</span></div>
<div class="ln" style="top:64.63px"><span class="no">201</span><span class="tx">    <span class="t">this</span><span class="p">.</span><span class="f">selectComponent</span>(<span class="p">'</span><span class="s">#riqipopup</span><span class="p">'</span>)<span class="p">.</span><span class="f">hideFrame</span>()<span class="p">;</span></span></div>
<div class="ln" style="top:86.29px"><span class="no">202</span><span class="tx">  <span class="p">}</span><span class="p">,</span></span></div>
<div class="ln" style="top:107.95px"><span class="no">203</span><svg class="fd" width="8" height="6" viewBox="0 0 8 6"><path d="M1 1.2 L4 4.2 L7 1.2" fill="none" stroke="#a8a8a8" stroke-width="0.9"/></svg><span class="tx">  <span class="f">yuyuedateChange</span><span class="p">(</span><span class="e">e</span><span class="p">)</span> <span class="p">{</span></span></div>
<div class="ln" style="top:129.61px"><span class="no">204</span><span class="tx">    <span class="k">const</span> curDate <span class="o">=</span> utils<span class="p">.</span><span class="f">getCurrentDate</span>()<span class="p">;</span></span></div>
<div class="ln" style="top:151.27px"><span class="no">205</span><svg class="fd" width="8" height="6" viewBox="0 0 8 6"><path d="M1 1.2 L4 4.2 L7 1.2" fill="none" stroke="#a8a8a8" stroke-width="0.9"/></svg><span class="tx">    <span class="c">if</span> (<span class="k">new</span> <span class="c">Date</span>(e<span class="p">.</span>detail<span class="p">.</span>value)<span class="p">.</span><span class="f">getTime</span>() <span class="o">==</span> <span class="k">new</span> <span class="c">Date</span>(curDate)<span class="p">.</span><span class="f">getTime</span>()) <span class="p bm">{</span></span></div>
<div class="ln cur" style="top:172.93px"><span class="no">206</span><span class="tx">      <span class="k">let</span> endtime <span class="o">=</span> <span class="t hl">this</span><span class="p">.</span>data<span class="p">.</span>detailList<span class="p">.</span>opentime<span class="p">.</span><span class="f">split</span>(<span class="p">'</span><span class="s">-</span><span class="p">'</span>)[<span class="n">1</span>]</span></div>
<div class="ln" style="top:194.59px"><span class="no">207</span><span class="tx">      <span class="k">let</span> time <span class="o">=</span> <span class="t hl2">this</span><span class="p">.</span><span class="f">getNextHour</span>()</span></div>
<div class="ln" style="top:216.25px"><span class="no">208</span><span class="tx">      <span class="k">var</span> a <span class="o">=</span> time<span class="p">.</span><span class="f">getHours</span>()</span></div>
<div class="ln" style="top:237.91px"><span class="no">209</span><span class="tx">      <span class="k">let</span> b <span class="o">=</span> endtime<span class="p">.</span><span class="f">split</span>(<span class="p">'</span><span class="s">:</span><span class="p">'</span>)[<span class="n">0</span>]</span></div>
<div class="ln" style="top:259.57px"><span class="no">210</span><span class="tx">      <span class="k">let</span> timelist <span class="o">=</span> []</span></div>
<div class="ln" style="top:281.23px"><span class="no">211</span><svg class="fd" width="8" height="6" viewBox="0 0 8 6"><path d="M1 1.2 L4 4.2 L7 1.2" fill="none" stroke="#a8a8a8" stroke-width="0.9"/></svg><span class="tx">      <span class="c">for</span> (<span class="k">let</span> x <span class="o">=</span> <span class="c">Number</span>(a)<span class="p">;</span> x <span class="o">&lt;</span> b<span class="p">;</span> x<span class="o">++</span>) <span class="p">{</span></span></div>
<div class="ln" style="top:302.89px"><span class="no">212</span><svg class="fd" width="8" height="6" viewBox="0 0 8 6"><path d="M1 1.2 L4 4.2 L7 1.2" fill="none" stroke="#a8a8a8" stroke-width="0.9"/></svg><span class="tx">        timelist<span class="p">.</span><span class="f">push</span>(<span class="p">{</span></span></div>
<div class="ln" style="top:324.55px"><span class="no">213</span><span class="tx">          name<span class="p">:</span> (x <span class="o">&lt;</span> <span class="n">10</span> <span class="o">?</span> (<span class="p">'</span><span class="s">0</span><span class="p">'</span> <span class="o">+</span> x) <span class="o">:</span> x) <span class="o">+</span> <span class="p">'</span><span class="s">:00</span><span class="p">'</span></span></div>
<div class="ln" style="top:346.21px"><span class="no">214</span><span class="tx">        <span class="p">}</span>)</span></div>
<div class="ln" style="top:367.87px"><span class="no">215</span><span class="tx">      <span class="p">}</span></span></div>
<div class="ln" style="top:389.53px"><span class="no">216</span><svg class="fd" width="8" height="6" viewBox="0 0 8 6"><path d="M1 1.2 L4 4.2 L7 1.2" fill="none" stroke="#a8a8a8" stroke-width="0.9"/></svg><span class="tx">      <span class="t hl">this</span><span class="p">.</span><span class="f">setData</span>(<span class="p">{</span></span></div>
<div class="ln" style="top:411.19px"><span class="no">217</span><span class="tx">        timelist</span></div>
<div class="ln" style="top:432.85px"><span class="no">218</span><span class="tx">      <span class="p">}</span>)</span></div>
<div class="ln" style="top:454.51px"><span class="no">219</span><svg class="fd" width="8" height="6" viewBox="0 0 8 6"><path d="M1 1.2 L4 4.2 L7 1.2" fill="none" stroke="#a8a8a8" stroke-width="0.9"/></svg><span class="tx">    <span class="p bm">}</span> <span class="c">else</span> <span class="p">{</span></span></div>
<div class="ln" style="top:476.17px"><span class="no">220</span><svg class="fd" width="8" height="6" viewBox="0 0 8 6"><path d="M1 1.2 L4 4.2 L7 1.2" fill="none" stroke="#a8a8a8" stroke-width="0.9"/></svg><span class="tx">      <span class="t hl">this</span><span class="p">.</span><span class="f">setData</span>(<span class="p">{</span></span></div>
<div class="abs" style="left:635.5px;top:0;width:10px;height:484.4px;background:#2f2f2f;border-left:0.8px solid #363636"></div>
<div class="abs" style="left:639px;top:163.6px;width:5px;height:1.6px;background:#c8c8c8"></div>
<div class="abs" style="left:640.2px;top:168px;width:3.2px;height:12.5px;background:#a8a8a8"></div>
</div>
<div id="find">
  <svg style="left:4.2px;top:6.6px" width="6" height="9" viewBox="0 0 6 9"><path d="M1 0.8 L4.8 4.5 L1 8.2" fill="none" stroke="#c8c8c8" stroke-width="0.9"/></svg>
  <div class="abs" style="left:11.4px;top:1.8px;width:154px;height:16.8px;background:#3b3b3b"></div>
  <div class="abs" style="left:14.4px;top:2.6px;font-size:9.3px;line-height:16px;color:#e6e6e6;white-space:nowrap">yuyueItem</div>
  <div class="abs" style="left:123.6px;top:2.6px;font-size:7.6px;line-height:15px;color:#c4c4c4">Aa</div>
  <div class="abs" style="left:137.6px;top:2.8px;font-size:6.6px;line-height:15px;color:#c4c4c4;letter-spacing:-0.2px">Abl</div>
  <div class="abs" style="left:137.2px;top:6px;width:10.4px;height:8.6px;border-top:0.7px solid #c4c4c4;border-bottom:0.7px solid #c4c4c4"></div>
  <svg style="left:152.6px;top:6px" width="11" height="10" viewBox="0 0 11 10"><rect x="0.8" y="5.6" width="2.8" height="2.8" fill="#c4c4c4"/><path d="M7.4 0.6 V6.2 M5 2 L9.8 4.8 M9.8 2 L5 4.8" stroke="#c4c4c4" stroke-width="0.8"/></svg>
  <div class="abs" style="left:169.6px;top:4.8px;font-size:8.2px;line-height:14px;color:#f48771;white-space:nowrap">无结果</div>
  <svg style="left:219.6px;top:6.4px" width="8" height="9" viewBox="0 0 8 9"><path d="M4 8.4 V1 M1 4 L4 1 L7 4" fill="none" stroke="#6a6a6a" stroke-width="0.8"/></svg>
  <svg style="left:235.6px;top:6.4px" width="8" height="9" viewBox="0 0 8 9"><path d="M4 0.6 V8 M1 5 L4 8 L7 5" fill="none" stroke="#6a6a6a" stroke-width="0.8"/></svg>
  <svg style="left:250.6px;top:6.2px" width="10" height="8" viewBox="0 0 10 8"><path d="M0.6 1 H9.4 M0.6 3.6 H9.4 M0.6 6.2 H6" stroke="#c4c4c4" stroke-width="0.8"/></svg>
  <svg style="left:269px;top:7.2px" width="7" height="7" viewBox="0 0 7 7"><path d="M0.8 0.8 L6.2 6.2 M6.2 0.8 L0.8 6.2" stroke="#e0e0e0" stroke-width="0.9"/></svg>
</div>
<div id="stat">
  <svg class="abs" style="left:11px;top:4.4px" width="10" height="10" viewBox="0 0 10 10"><circle cx="5" cy="5" r="3.9" fill="none" stroke="#b0b0b0" stroke-width="0.8"/><path d="M3.4 3.4 L6.6 6.6 M6.6 3.4 L3.4 6.6" stroke="#b0b0b0" stroke-width="0.8"/></svg>
  <span style="left:22.6px">0</span>
  <svg class="abs" style="left:29.2px;top:4.6px" width="10" height="9" viewBox="0 0 10 9"><path d="M5 0.9 L9.2 8.2 H0.8 Z" fill="none" stroke="#b0b0b0" stroke-width="0.8" stroke-linejoin="round"/><path d="M5 3.4 V5.8 M5 6.6 V7.3" stroke="#b0b0b0" stroke-width="0.7"/></svg>
  <span style="left:41.2px">0</span>
  <span style="left:565.6px">行 206，列 24</span>
  <span style="left:630.6px">空格: 2</span>
  <span style="left:667.6px">UTF-8</span>
  <span style="left:703.6px">CRLF</span>
  <span style="left:734.6px">JavaScript</span>
</div>
</div>
<svg id="wm" class="abs" style="left:-1px;top:-1px;pointer-events:none" width="1024" height="597" viewBox="0 0 1024 597">
<g transform="translate(36.0,14)"><circle cx="0" cy="0" r="14" fill="rgba(0,0,0,0.085)"/><g fill="rgba(170,170,170,0.17)"><circle cx="4.5" cy="-12.5" r="2.9"/><circle cx="10" cy="-15.6" r="2.9"/><circle cx="14.6" cy="-11" r="2.9"/><circle cx="9.4" cy="-9.6" r="2.6"/><path d="M12 3.5 a9.6 9.6 0 1 1 3.5 15.5 a14 14 0 0 0 -3.5 -15.5 z"/></g><path d="M18 2.6 q4 7 -1 15.5 M23.5 3.6 q3 7 -2 15" fill="none" stroke="rgba(0,0,0,0.09)" stroke-width="0.9"/><path d="M-8.2 -3.6 l1.4 5.4" stroke="rgba(210,210,210,0.22)" stroke-width="1.6" stroke-linecap="round"/><circle cx="-5.8" cy="4.6" r="0.9" fill="rgba(210,210,210,0.22)"/><g transform="rotate(24)" fill="rgba(78,78,78,0.15)" font-family="Liberation Sans,Noto Sans CJK SC,sans-serif" font-weight="900" font-style="italic"><text x="-28" y="33.6" font-size="14.2" letter-spacing="0.5">杭州水果捞</text><text x="-25.6" y="45.2" font-size="10" letter-spacing="3.1">HZFRUIT</text></g></g>
<g transform="translate(180.8,14)"><circle cx="0" cy="0" r="14" fill="rgba(0,0,0,0.085)"/><g fill="rgba(170,170,170,0.17)"><circle cx="4.5" cy="-12.5" r="2.9"/><circle cx="10" cy="-15.6" r="2.9"/><circle cx="14.6" cy="-11" r="2.9"/><circle cx="9.4" cy="-9.6" r="2.6"/><path d="M12 3.5 a9.6 9.6 0 1 1 3.5 15.5 a14 14 0 0 0 -3.5 -15.5 z"/></g><path d="M18 2.6 q4 7 -1 15.5 M23.5 3.6 q3 7 -2 15" fill="none" stroke="rgba(0,0,0,0.09)" stroke-width="0.9"/><path d="M-8.2 -3.6 l1.4 5.4" stroke="rgba(210,210,210,0.22)" stroke-width="1.6" stroke-linecap="round"/><circle cx="-5.8" cy="4.6" r="0.9" fill="rgba(210,210,210,0.22)"/><g transform="rotate(24)" fill="rgba(78,78,78,0.15)" font-family="Liberation Sans,Noto Sans CJK SC,sans-serif" font-weight="900" font-style="italic"><text x="-28" y="33.6" font-size="14.2" letter-spacing="0.5">杭州水果捞</text><text x="-25.6" y="45.2" font-size="10" letter-spacing="3.1">HZFRUIT</text></g></g>
<g transform="translate(325.6,14)"><circle cx="0" cy="0" r="14" fill="rgba(0,0,0,0.085)"/><g fill="rgba(170,170,170,0.17)"><circle cx="4.5" cy="-12.5" r="2.9"/><circle cx="10" cy="-15.6" r="2.9"/><circle cx="14.6" cy="-11" r="2.9"/><circle cx="9.4" cy="-9.6" r="2.6"/><path d="M12 3.5 a9.6 9.6 0 1 1 3.5 15.5 a14 14 0 0 0 -3.5 -15.5 z"/></g><path d="M18 2.6 q4 7 -1 15.5 M23.5 3.6 q3 7 -2 15" fill="none" stroke="rgba(0,0,0,0.09)" stroke-width="0.9"/><path d="M-8.2 -3.6 l1.4 5.4" stroke="rgba(210,210,210,0.22)" stroke-width="1.6" stroke-linecap="round"/><circle cx="-5.8" cy="4.6" r="0.9" fill="rgba(210,210,210,0.22)"/><g transform="rotate(24)" fill="rgba(78,78,78,0.15)" font-family="Liberation Sans,Noto Sans CJK SC,sans-serif" font-weight="900" font-style="italic"><text x="-28" y="33.6" font-size="14.2" letter-spacing="0.5">杭州水果捞</text><text x="-25.6" y="45.2" font-size="10" letter-spacing="3.1">HZFRUIT</text></g></g>
<g transform="translate(470.4,14)"><circle cx="0" cy="0" r="14" fill="rgba(0,0,0,0.085)"/><g fill="rgba(170,170,170,0.17)"><circle cx="4.5" cy="-12.5" r="2.9"/><circle cx="10" cy="-15.6" r="2.9"/><circle cx="14.6" cy="-11" r="2.9"/><circle cx="9.4" cy="-9.6" r="2.6"/><path d="M12 3.5 a9.6 9.6 0 1 1 3.5 15.5 a14 14 0 0 0 -3.5 -15.5 z"/></g><path d="M18 2.6 q4 7 -1 15.5 M23.5 3.6 q3 7 -2 15" fill="none" stroke="rgba(0,0,0,0.09)" stroke-width="0.9"/><path d="M-8.2 -3.6 l1.4 5.4" stroke="rgba(210,210,210,0.22)" stroke-width="1.6" stroke-linecap="round"/><circle cx="-5.8" cy="4.6" r="0.9" fill="rgba(210,210,210,0.22)"/><g transform="rotate(24)" fill="rgba(78,78,78,0.15)" font-family="Liberation Sans,Noto Sans CJK SC,sans-serif" font-weight="900" font-style="italic"><text x="-28" y="33.6" font-size="14.2" letter-spacing="0.5">杭州水果捞</text><text x="-25.6" y="45.2" font-size="10" letter-spacing="3.1">HZFRUIT</text></g></g>
<g transform="translate(615.2,14)"><circle cx="0" cy="0" r="14" fill="rgba(0,0,0,0.085)"/><g fill="rgba(170,170,170,0.17)"><circle cx="4.5" cy="-12.5" r="2.9"/><circle cx="10" cy="-15.6" r="2.9"/><circle cx="14.6" cy="-11" r="2.9"/><circle cx="9.4" cy="-9.6" r="2.6"/><path d="M12 3.5 a9.6 9.6 0 1 1 3.5 15.5 a14 14 0 0 0 -3.5 -15.5 z"/></g><path d="M18 2.6 q4 7 -1 15.5 M23.5 3.6 q3 7 -2 15" fill="none" stroke="rgba(0,0,0,0.09)" stroke-width="0.9"/><path d="M-8.2 -3.6 l1.4 5.4" stroke="rgba(210,210,210,0.22)" stroke-width="1.6" stroke-linecap="round"/><circle cx="-5.8" cy="4.6" r="0.9" fill="rgba(210,210,210,0.22)"/><g transform="rotate(24)" fill="rgba(78,78,78,0.15)" font-family="Liberation Sans,Noto Sans CJK SC,sans-serif" font-weight="900" font-style="italic"><text x="-28" y="33.6" font-size="14.2" letter-spacing="0.5">杭州水果捞</text><text x="-25.6" y="45.2" font-size="10" letter-spacing="3.1">HZFRUIT</text></g></g>
<g transform="translate(760.0,14)"><circle cx="0" cy="0" r="14" fill="rgba(0,0,0,0.085)"/><g fill="rgba(170,170,170,0.17)"><circle cx="4.5" cy="-12.5" r="2.9"/><circle cx="10" cy="-15.6" r="2.9"/><circle cx="14.6" cy="-11" r="2.9"/><circle cx="9.4" cy="-9.6" r="2.6"/><path d="M12 3.5 a9.6 9.6 0 1 1 3.5 15.5 a14 14 0 0 0 -3.5 -15.5 z"/></g><path d="M18 2.6 q4 7 -1 15.5 M23.5 3.6 q3 7 -2 15" fill="none" stroke="rgba(0,0,0,0.09)" stroke-width="0.9"/><path d="M-8.2 -3.6 l1.4 5.4" stroke="rgba(210,210,210,0.22)" stroke-width="1.6" stroke-linecap="round"/><circle cx="-5.8" cy="4.6" r="0.9" fill="rgba(210,210,210,0.22)"/><g transform="rotate(24)" fill="rgba(78,78,78,0.15)" font-family="Liberation Sans,Noto Sans CJK SC,sans-serif" font-weight="900" font-style="italic"><text x="-28" y="33.6" font-size="14.2" letter-spacing="0.5">杭州水果捞</text><text x="-25.6" y="45.2" font-size="10" letter-spacing="3.1">HZFRUIT</text></g></g>
<g transform="translate(904.8,14)"><circle cx="0" cy="0" r="14" fill="rgba(0,0,0,0.085)"/><g fill="rgba(170,170,170,0.17)"><circle cx="4.5" cy="-12.5" r="2.9"/><circle cx="10" cy="-15.6" r="2.9"/><circle cx="14.6" cy="-11" r="2.9"/><circle cx="9.4" cy="-9.6" r="2.6"/><path d="M12 3.5 a9.6 9.6 0 1 1 3.5 15.5 a14 14 0 0 0 -3.5 -15.5 z"/></g><path d="M18 2.6 q4 7 -1 15.5 M23.5 3.6 q3 7 -2 15" fill="none" stroke="rgba(0,0,0,0.09)" stroke-width="0.9"/><path d="M-8.2 -3.6 l1.4 5.4" stroke="rgba(210,210,210,0.22)" stroke-width="1.6" stroke-linecap="round"/><circle cx="-5.8" cy="4.6" r="0.9" fill="rgba(210,210,210,0.22)"/><g transform="rotate(24)" fill="rgba(78,78,78,0.15)" font-family="Liberation Sans,Noto Sans CJK SC,sans-serif" font-weight="900" font-style="italic"><text x="-28" y="33.6" font-size="14.2" letter-spacing="0.5">杭州水果捞</text><text x="-25.6" y="45.2" font-size="10" letter-spacing="3.1">HZFRUIT</text></g></g>
<g transform="translate(1049.6,14)"><circle cx="0" cy="0" r="14" fill="rgba(0,0,0,0.085)"/><g fill="rgba(170,170,170,0.17)"><circle cx="4.5" cy="-12.5" r="2.9"/><circle cx="10" cy="-15.6" r="2.9"/><circle cx="14.6" cy="-11" r="2.9"/><circle cx="9.4" cy="-9.6" r="2.6"/><path d="M12 3.5 a9.6 9.6 0 1 1 3.5 15.5 a14 14 0 0 0 -3.5 -15.5 z"/></g><path d="M18 2.6 q4 7 -1 15.5 M23.5 3.6 q3 7 -2 15" fill="none" stroke="rgba(0,0,0,0.09)" stroke-width="0.9"/><path d="M-8.2 -3.6 l1.4 5.4" stroke="rgba(210,210,210,0.22)" stroke-width="1.6" stroke-linecap="round"/><circle cx="-5.8" cy="4.6" r="0.9" fill="rgba(210,210,210,0.22)"/><g transform="rotate(24)" fill="rgba(78,78,78,0.15)" font-family="Liberation Sans,Noto Sans CJK SC,sans-serif" font-weight="900" font-style="italic"><text x="-28" y="33.6" font-size="14.2" letter-spacing="0.5">杭州水果捞</text><text x="-25.6" y="45.2" font-size="10" letter-spacing="3.1">HZFRUIT</text></g></g>
<g transform="translate(71.0,133)"><circle cx="0" cy="0" r="14" fill="rgba(0,0,0,0.085)"/><g fill="rgba(170,170,170,0.17)"><circle cx="4.5" cy="-12.5" r="2.9"/><circle cx="10" cy="-15.6" r="2.9"/><circle cx="14.6" cy="-11" r="2.9"/><circle cx="9.4" cy="-9.6" r="2.6"/><path d="M12 3.5 a9.6 9.6 0 1 1 3.5 15.5 a14 14 0 0 0 -3.5 -15.5 z"/></g><path d="M18 2.6 q4 7 -1 15.5 M23.5 3.6 q3 7 -2 15" fill="none" stroke="rgba(0,0,0,0.09)" stroke-width="0.9"/><path d="M-8.2 -3.6 l1.4 5.4" stroke="rgba(210,210,210,0.22)" stroke-width="1.6" stroke-linecap="round"/><circle cx="-5.8" cy="4.6" r="0.9" fill="rgba(210,210,210,0.22)"/><g transform="rotate(24)" fill="rgba(78,78,78,0.15)" font-family="Liberation Sans,Noto Sans CJK SC,sans-serif" font-weight="900" font-style="italic"><text x="-28" y="33.6" font-size="14.2" letter-spacing="0.5">杭州水果捞</text><text x="-25.6" y="45.2" font-size="10" letter-spacing="3.1">HZFRUIT</text></g></g>
<g transform="translate(215.8,133)"><circle cx="0" cy="0" r="14" fill="rgba(0,0,0,0.085)"/><g fill="rgba(170,170,170,0.17)"><circle cx="4.5" cy="-12.5" r="2.9"/><circle cx="10" cy="-15.6" r="2.9"/><circle cx="14.6" cy="-11" r="2.9"/><circle cx="9.4" cy="-9.6" r="2.6"/><path d="M12 3.5 a9.6 9.6 0 1 1 3.5 15.5 a14 14 0 0 0 -3.5 -15.5 z"/></g><path d="M18 2.6 q4 7 -1 15.5 M23.5 3.6 q3 7 -2 15" fill="none" stroke="rgba(0,0,0,0.09)" stroke-width="0.9"/><path d="M-8.2 -3.6 l1.4 5.4" stroke="rgba(210,210,210,0.22)" stroke-width="1.6" stroke-linecap="round"/><circle cx="-5.8" cy="4.6" r="0.9" fill="rgba(210,210,210,0.22)"/><g transform="rotate(24)" fill="rgba(78,78,78,0.15)" font-family="Liberation Sans,Noto Sans CJK SC,sans-serif" font-weight="900" font-style="italic"><text x="-28" y="33.6" font-size="14.2" letter-spacing="0.5">杭州水果捞</text><text x="-25.6" y="45.2" font-size="10" letter-spacing="3.1">HZFRUIT</text></g></g>
<g transform="translate(360.6,133)"><circle cx="0" cy="0" r="14" fill="rgba(0,0,0,0.085)"/><g fill="rgba(170,170,170,0.17)"><circle cx="4.5" cy="-12.5" r="2.9"/><circle cx="10" cy="-15.6" r="2.9"/><circle cx="14.6" cy="-11" r="2.9"/><circle cx="9.4" cy="-9.6" r="2.6"/><path d="M12 3.5 a9.6 9.6 0 1 1 3.5 15.5 a14 14 0 0 0 -3.5 -15.5 z"/></g><path d="M18 2.6 q4 7 -1 15.5 M23.5 3.6 q3 7 -2 15" fill="none" stroke="rgba(0,0,0,0.09)" stroke-width="0.9"/><path d="M-8.2 -3.6 l1.4 5.4" stroke="rgba(210,210,210,0.22)" stroke-width="1.6" stroke-linecap="round"/><circle cx="-5.8" cy="4.6" r="0.9" fill="rgba(210,210,210,0.22)"/><g transform="rotate(24)" fill="rgba(78,78,78,0.15)" font-family="Liberation Sans,Noto Sans CJK SC,sans-serif" font-weight="900" font-style="italic"><text x="-28" y="33.6" font-size="14.2" letter-spacing="0.5">杭州水果捞</text><text x="-25.6" y="45.2" font-size="10" letter-spacing="3.1">HZFRUIT</text></g></g>
<g transform="translate(505.4,133)"><circle cx="0" cy="0" r="14" fill="rgba(0,0,0,0.085)"/><g fill="rgba(170,170,170,0.17)"><circle cx="4.5" cy="-12.5" r="2.9"/><circle cx="10" cy="-15.6" r="2.9"/><circle cx="14.6" cy="-11" r="2.9"/><circle cx="9.4" cy="-9.6" r="2.6"/><path d="M12 3.5 a9.6 9.6 0 1 1 3.5 15.5 a14 14 0 0 0 -3.5 -15.5 z"/></g><path d="M18 2.6 q4 7 -1 15.5 M23.5 3.6 q3 7 -2 15" fill="none" stroke="rgba(0,0,0,0.09)" stroke-width="0.9"/><path d="M-8.2 -3.6 l1.4 5.4" stroke="rgba(210,210,210,0.22)" stroke-width="1.6" stroke-linecap="round"/><circle cx="-5.8" cy="4.6" r="0.9" fill="rgba(210,210,210,0.22)"/><g transform="rotate(24)" fill="rgba(78,78,78,0.15)" font-family="Liberation Sans,Noto Sans CJK SC,sans-serif" font-weight="900" font-style="italic"><text x="-28" y="33.6" font-size="14.2" letter-spacing="0.5">杭州水果捞</text><text x="-25.6" y="45.2" font-size="10" letter-spacing="3.1">HZFRUIT</text></g></g>
<g transform="translate(650.2,133)"><circle cx="0" cy="0" r="14" fill="rgba(0,0,0,0.085)"/><g fill="rgba(170,170,170,0.17)"><circle cx="4.5" cy="-12.5" r="2.9"/><circle cx="10" cy="-15.6" r="2.9"/><circle cx="14.6" cy="-11" r="2.9"/><circle cx="9.4" cy="-9.6" r="2.6"/><path d="M12 3.5 a9.6 9.6 0 1 1 3.5 15.5 a14 14 0 0 0 -3.5 -15.5 z"/></g><path d="M18 2.6 q4 7 -1 15.5 M23.5 3.6 q3 7 -2 15" fill="none" stroke="rgba(0,0,0,0.09)" stroke-width="0.9"/><path d="M-8.2 -3.6 l1.4 5.4" stroke="rgba(210,210,210,0.22)" stroke-width="1.6" stroke-linecap="round"/><circle cx="-5.8" cy="4.6" r="0.9" fill="rgba(210,210,210,0.22)"/><g transform="rotate(24)" fill="rgba(78,78,78,0.15)" font-family="Liberation Sans,Noto Sans CJK SC,sans-serif" font-weight="900" font-style="italic"><text x="-28" y="33.6" font-size="14.2" letter-spacing="0.5">杭州水果捞</text><text x="-25.6" y="45.2" font-size="10" letter-spacing="3.1">HZFRUIT</text></g></g>
<g transform="translate(795.0,133)"><circle cx="0" cy="0" r="14" fill="rgba(0,0,0,0.085)"/><g fill="rgba(170,170,170,0.17)"><circle cx="4.5" cy="-12.5" r="2.9"/><circle cx="10" cy="-15.6" r="2.9"/><circle cx="14.6" cy="-11" r="2.9"/><circle cx="9.4" cy="-9.6" r="2.6"/><path d="M12 3.5 a9.6 9.6 0 1 1 3.5 15.5 a14 14 0 0 0 -3.5 -15.5 z"/></g><path d="M18 2.6 q4 7 -1 15.5 M23.5 3.6 q3 7 -2 15" fill="none" stroke="rgba(0,0,0,0.09)" stroke-width="0.9"/><path d="M-8.2 -3.6 l1.4 5.4" stroke="rgba(210,210,210,0.22)" stroke-width="1.6" stroke-linecap="round"/><circle cx="-5.8" cy="4.6" r="0.9" fill="rgba(210,210,210,0.22)"/><g transform="rotate(24)" fill="rgba(78,78,78,0.15)" font-family="Liberation Sans,Noto Sans CJK SC,sans-serif" font-weight="900" font-style="italic"><text x="-28" y="33.6" font-size="14.2" letter-spacing="0.5">杭州水果捞</text><text x="-25.6" y="45.2" font-size="10" letter-spacing="3.1">HZFRUIT</text></g></g>
<g transform="translate(939.8,133)"><circle cx="0" cy="0" r="14" fill="rgba(0,0,0,0.085)"/><g fill="rgba(170,170,170,0.17)"><circle cx="4.5" cy="-12.5" r="2.9"/><circle cx="10" cy="-15.6" r="2.9"/><circle cx="14.6" cy="-11" r="2.9"/><circle cx="9.4" cy="-9.6" r="2.6"/><path d="M12 3.5 a9.6 9.6 0 1 1 3.5 15.5 a14 14 0 0 0 -3.5 -15.5 z"/></g><path d="M18 2.6 q4 7 -1 15.5 M23.5 3.6 q3 7 -2 15" fill="none" stroke="rgba(0,0,0,0.09)" stroke-width="0.9"/><path d="M-8.2 -3.6 l1.4 5.4" stroke="rgba(210,210,210,0.22)" stroke-width="1.6" stroke-linecap="round"/><circle cx="-5.8" cy="4.6" r="0.9" fill="rgba(210,210,210,0.22)"/><g transform="rotate(24)" fill="rgba(78,78,78,0.15)" font-family="Liberation Sans,Noto Sans CJK SC,sans-serif" font-weight="900" font-style="italic"><text x="-28" y="33.6" font-size="14.2" letter-spacing="0.5">杭州水果捞</text><text x="-25.6" y="45.2" font-size="10" letter-spacing="3.1">HZFRUIT</text></g></g>
<g transform="translate(36.0,255)"><circle cx="0" cy="0" r="14" fill="rgba(0,0,0,0.085)"/><g fill="rgba(170,170,170,0.17)"><circle cx="4.5" cy="-12.5" r="2.9"/><circle cx="10" cy="-15.6" r="2.9"/><circle cx="14.6" cy="-11" r="2.9"/><circle cx="9.4" cy="-9.6" r="2.6"/><path d="M12 3.5 a9.6 9.6 0 1 1 3.5 15.5 a14 14 0 0 0 -3.5 -15.5 z"/></g><path d="M18 2.6 q4 7 -1 15.5 M23.5 3.6 q3 7 -2 15" fill="none" stroke="rgba(0,0,0,0.09)" stroke-width="0.9"/><path d="M-8.2 -3.6 l1.4 5.4" stroke="rgba(210,210,210,0.22)" stroke-width="1.6" stroke-linecap="round"/><circle cx="-5.8" cy="4.6" r="0.9" fill="rgba(210,210,210,0.22)"/><g transform="rotate(24)" fill="rgba(78,78,78,0.15)" font-family="Liberation Sans,Noto Sans CJK SC,sans-serif" font-weight="900" font-style="italic"><text x="-28" y="33.6" font-size="14.2" letter-spacing="0.5">杭州水果捞</text><text x="-25.6" y="45.2" font-size="10" letter-spacing="3.1">HZFRUIT</text></g></g>
<g transform="translate(180.8,255)"><circle cx="0" cy="0" r="14" fill="rgba(0,0,0,0.085)"/><g fill="rgba(170,170,170,0.17)"><circle cx="4.5" cy="-12.5" r="2.9"/><circle cx="10" cy="-15.6" r="2.9"/><circle cx="14.6" cy="-11" r="2.9"/><circle cx="9.4" cy="-9.6" r="2.6"/><path d="M12 3.5 a9.6 9.6 0 1 1 3.5 15.5 a14 14 0 0 0 -3.5 -15.5 z"/></g><path d="M18 2.6 q4 7 -1 15.5 M23.5 3.6 q3 7 -2 15" fill="none" stroke="rgba(0,0,0,0.09)" stroke-width="0.9"/><path d="M-8.2 -3.6 l1.4 5.4" stroke="rgba(210,210,210,0.22)" stroke-width="1.6" stroke-linecap="round"/><circle cx="-5.8" cy="4.6" r="0.9" fill="rgba(210,210,210,0.22)"/><g transform="rotate(24)" fill="rgba(78,78,78,0.15)" font-family="Liberation Sans,Noto Sans CJK SC,sans-serif" font-weight="900" font-style="italic"><text x="-28" y="33.6" font-size="14.2" letter-spacing="0.5">杭州水果捞</text><text x="-25.6" y="45.2" font-size="10" letter-spacing="3.1">HZFRUIT</text></g></g>
<g transform="translate(325.6,255)"><circle cx="0" cy="0" r="14" fill="rgba(0,0,0,0.085)"/><g fill="rgba(170,170,170,0.17)"><circle cx="4.5" cy="-12.5" r="2.9"/><circle cx="10" cy="-15.6" r="2.9"/><circle cx="14.6" cy="-11" r="2.9"/><circle cx="9.4" cy="-9.6" r="2.6"/><path d="M12 3.5 a9.6 9.6 0 1 1 3.5 15.5 a14 14 0 0 0 -3.5 -15.5 z"/></g><path d="M18 2.6 q4 7 -1 15.5 M23.5 3.6 q3 7 -2 15" fill="none" stroke="rgba(0,0,0,0.09)" stroke-width="0.9"/><path d="M-8.2 -3.6 l1.4 5.4" stroke="rgba(210,210,210,0.22)" stroke-width="1.6" stroke-linecap="round"/><circle cx="-5.8" cy="4.6" r="0.9" fill="rgba(210,210,210,0.22)"/><g transform="rotate(24)" fill="rgba(78,78,78,0.15)" font-family="Liberation Sans,Noto Sans CJK SC,sans-serif" font-weight="900" font-style="italic"><text x="-28" y="33.6" font-size="14.2" letter-spacing="0.5">杭州水果捞</text><text x="-25.6" y="45.2" font-size="10" letter-spacing="3.1">HZFRUIT</text></g></g>
<g transform="translate(470.4,255)"><circle cx="0" cy="0" r="14" fill="rgba(0,0,0,0.085)"/><g fill="rgba(170,170,170,0.17)"><circle cx="4.5" cy="-12.5" r="2.9"/><circle cx="10" cy="-15.6" r="2.9"/><circle cx="14.6" cy="-11" r="2.9"/><circle cx="9.4" cy="-9.6" r="2.6"/><path d="M12 3.5 a9.6 9.6 0 1 1 3.5 15.5 a14 14 0 0 0 -3.5 -15.5 z"/></g><path d="M18 2.6 q4 7 -1 15.5 M23.5 3.6 q3 7 -2 15" fill="none" stroke="rgba(0,0,0,0.09)" stroke-width="0.9"/><path d="M-8.2 -3.6 l1.4 5.4" stroke="rgba(210,210,210,0.22)" stroke-width="1.6" stroke-linecap="round"/><circle cx="-5.8" cy="4.6" r="0.9" fill="rgba(210,210,210,0.22)"/><g transform="rotate(24)" fill="rgba(78,78,78,0.15)" font-family="Liberation Sans,Noto Sans CJK SC,sans-serif" font-weight="900" font-style="italic"><text x="-28" y="33.6" font-size="14.2" letter-spacing="0.5">杭州水果捞</text><text x="-25.6" y="45.2" font-size="10" letter-spacing="3.1">HZFRUIT</text></g></g>
<g transform="translate(615.2,255)"><circle cx="0" cy="0" r="14" fill="rgba(0,0,0,0.085)"/><g fill="rgba(170,170,170,0.17)"><circle cx="4.5" cy="-12.5" r="2.9"/><circle cx="10" cy="-15.6" r="2.9"/><circle cx="14.6" cy="-11" r="2.9"/><circle cx="9.4" cy="-9.6" r="2.6"/><path d="M12 3.5 a9.6 9.6 0 1 1 3.5 15.5 a14 14 0 0 0 -3.5 -15.5 z"/></g><path d="M18 2.6 q4 7 -1 15.5 M23.5 3.6 q3 7 -2 15" fill="none" stroke="rgba(0,0,0,0.09)" stroke-width="0.9"/><path d="M-8.2 -3.6 l1.4 5.4" stroke="rgba(210,210,210,0.22)" stroke-width="1.6" stroke-linecap="round"/><circle cx="-5.8" cy="4.6" r="0.9" fill="rgba(210,210,210,0.22)"/><g transform="rotate(24)" fill="rgba(78,78,78,0.15)" font-family="Liberation Sans,Noto Sans CJK SC,sans-serif" font-weight="900" font-style="italic"><text x="-28" y="33.6" font-size="14.2" letter-spacing="0.5">杭州水果捞</text><text x="-25.6" y="45.2" font-size="10" letter-spacing="3.1">HZFRUIT</text></g></g>
<g transform="translate(760.0,255)"><circle cx="0" cy="0" r="14" fill="rgba(0,0,0,0.085)"/><g fill="rgba(170,170,170,0.17)"><circle cx="4.5" cy="-12.5" r="2.9"/><circle cx="10" cy="-15.6" r="2.9"/><circle cx="14.6" cy="-11" r="2.9"/><circle cx="9.4" cy="-9.6" r="2.6"/><path d="M12 3.5 a9.6 9.6 0 1 1 3.5 15.5 a14 14 0 0 0 -3.5 -15.5 z"/></g><path d="M18 2.6 q4 7 -1 15.5 M23.5 3.6 q3 7 -2 15" fill="none" stroke="rgba(0,0,0,0.09)" stroke-width="0.9"/><path d="M-8.2 -3.6 l1.4 5.4" stroke="rgba(210,210,210,0.22)" stroke-width="1.6" stroke-linecap="round"/><circle cx="-5.8" cy="4.6" r="0.9" fill="rgba(210,210,210,0.22)"/><g transform="rotate(24)" fill="rgba(78,78,78,0.15)" font-family="Liberation Sans,Noto Sans CJK SC,sans-serif" font-weight="900" font-style="italic"><text x="-28" y="33.6" font-size="14.2" letter-spacing="0.5">杭州水果捞</text><text x="-25.6" y="45.2" font-size="10" letter-spacing="3.1">HZFRUIT</text></g></g>
<g transform="translate(904.8,255)"><circle cx="0" cy="0" r="14" fill="rgba(0,0,0,0.085)"/><g fill="rgba(170,170,170,0.17)"><circle cx="4.5" cy="-12.5" r="2.9"/><circle cx="10" cy="-15.6" r="2.9"/><circle cx="14.6" cy="-11" r="2.9"/><circle cx="9.4" cy="-9.6" r="2.6"/><path d="M12 3.5 a9.6 9.6 0 1 1 3.5 15.5 a14 14 0 0 0 -3.5 -15.5 z"/></g><path d="M18 2.6 q4 7 -1 15.5 M23.5 3.6 q3 7 -2 15" fill="none" stroke="rgba(0,0,0,0.09)" stroke-width="0.9"/><path d="M-8.2 -3.6 l1.4 5.4" stroke="rgba(210,210,210,0.22)" stroke-width="1.6" stroke-linecap="round"/><circle cx="-5.8" cy="4.6" r="0.9" fill="rgba(210,210,210,0.22)"/><g transform="rotate(24)" fill="rgba(78,78,78,0.15)" font-family="Liberation Sans,Noto Sans CJK SC,sans-serif" font-weight="900" font-style="italic"><text x="-28" y="33.6" font-size="14.2" letter-spacing="0.5">杭州水果捞</text><text x="-25.6" y="45.2" font-size="10" letter-spacing="3.1">HZFRUIT</text></g></g>
<g transform="translate(1049.6,255)"><circle cx="0" cy="0" r="14" fill="rgba(0,0,0,0.085)"/><g fill="rgba(170,170,170,0.17)"><circle cx="4.5" cy="-12.5" r="2.9"/><circle cx="10" cy="-15.6" r="2.9"/><circle cx="14.6" cy="-11" r="2.9"/><circle cx="9.4" cy="-9.6" r="2.6"/><path d="M12 3.5 a9.6 9.6 0 1 1 3.5 15.5 a14 14 0 0 0 -3.5 -15.5 z"/></g><path d="M18 2.6 q4 7 -1 15.5 M23.5 3.6 q3 7 -2 15" fill="none" stroke="rgba(0,0,0,0.09)" stroke-width="0.9"/><path d="M-8.2 -3.6 l1.4 5.4" stroke="rgba(210,210,210,0.22)" stroke-width="1.6" stroke-linecap="round"/><circle cx="-5.8" cy="4.6" r="0.9" fill="rgba(210,210,210,0.22)"/><g transform="rotate(24)" fill="rgba(78,78,78,0.15)" font-family="Liberation Sans,Noto Sans CJK SC,sans-serif" font-weight="900" font-style="italic"><text x="-28" y="33.6" font-size="14.2" letter-spacing="0.5">杭州水果捞</text><text x="-25.6" y="45.2" font-size="10" letter-spacing="3.1">HZFRUIT</text></g></g>
<g transform="translate(73.0,377)"><circle cx="0" cy="0" r="14" fill="rgba(0,0,0,0.085)"/><g fill="rgba(170,170,170,0.17)"><circle cx="4.5" cy="-12.5" r="2.9"/><circle cx="10" cy="-15.6" r="2.9"/><circle cx="14.6" cy="-11" r="2.9"/><circle cx="9.4" cy="-9.6" r="2.6"/><path d="M12 3.5 a9.6 9.6 0 1 1 3.5 15.5 a14 14 0 0 0 -3.5 -15.5 z"/></g><path d="M18 2.6 q4 7 -1 15.5 M23.5 3.6 q3 7 -2 15" fill="none" stroke="rgba(0,0,0,0.09)" stroke-width="0.9"/><path d="M-8.2 -3.6 l1.4 5.4" stroke="rgba(210,210,210,0.22)" stroke-width="1.6" stroke-linecap="round"/><circle cx="-5.8" cy="4.6" r="0.9" fill="rgba(210,210,210,0.22)"/><g transform="rotate(24)" fill="rgba(78,78,78,0.15)" font-family="Liberation Sans,Noto Sans CJK SC,sans-serif" font-weight="900" font-style="italic"><text x="-28" y="33.6" font-size="14.2" letter-spacing="0.5">杭州水果捞</text><text x="-25.6" y="45.2" font-size="10" letter-spacing="3.1">HZFRUIT</text></g></g>
<g transform="translate(217.8,377)"><circle cx="0" cy="0" r="14" fill="rgba(0,0,0,0.085)"/><g fill="rgba(170,170,170,0.17)"><circle cx="4.5" cy="-12.5" r="2.9"/><circle cx="10" cy="-15.6" r="2.9"/><circle cx="14.6" cy="-11" r="2.9"/><circle cx="9.4" cy="-9.6" r="2.6"/><path d="M12 3.5 a9.6 9.6 0 1 1 3.5 15.5 a14 14 0 0 0 -3.5 -15.5 z"/></g><path d="M18 2.6 q4 7 -1 15.5 M23.5 3.6 q3 7 -2 15" fill="none" stroke="rgba(0,0,0,0.09)" stroke-width="0.9"/><path d="M-8.2 -3.6 l1.4 5.4" stroke="rgba(210,210,210,0.22)" stroke-width="1.6" stroke-linecap="round"/><circle cx="-5.8" cy="4.6" r="0.9" fill="rgba(210,210,210,0.22)"/><g transform="rotate(24)" fill="rgba(78,78,78,0.15)" font-family="Liberation Sans,Noto Sans CJK SC,sans-serif" font-weight="900" font-style="italic"><text x="-28" y="33.6" font-size="14.2" letter-spacing="0.5">杭州水果捞</text><text x="-25.6" y="45.2" font-size="10" letter-spacing="3.1">HZFRUIT</text></g></g>
<g transform="translate(362.6,377)"><circle cx="0" cy="0" r="14" fill="rgba(0,0,0,0.085)"/><g fill="rgba(170,170,170,0.17)"><circle cx="4.5" cy="-12.5" r="2.9"/><circle cx="10" cy="-15.6" r="2.9"/><circle cx="14.6" cy="-11" r="2.9"/><circle cx="9.4" cy="-9.6" r="2.6"/><path d="M12 3.5 a9.6 9.6 0 1 1 3.5 15.5 a14 14 0 0 0 -3.5 -15.5 z"/></g><path d="M18 2.6 q4 7 -1 15.5 M23.5 3.6 q3 7 -2 15" fill="none" stroke="rgba(0,0,0,0.09)" stroke-width="0.9"/><path d="M-8.2 -3.6 l1.4 5.4" stroke="rgba(210,210,210,0.22)" stroke-width="1.6" stroke-linecap="round"/><circle cx="-5.8" cy="4.6" r="0.9" fill="rgba(210,210,210,0.22)"/><g transform="rotate(24)" fill="rgba(78,78,78,0.15)" font-family="Liberation Sans,Noto Sans CJK SC,sans-serif" font-weight="900" font-style="italic"><text x="-28" y="33.6" font-size="14.2" letter-spacing="0.5">杭州水果捞</text><text x="-25.6" y="45.2" font-size="10" letter-spacing="3.1">HZFRUIT</text></g></g>
<g transform="translate(507.4,377)"><circle cx="0" cy="0" r="14" fill="rgba(0,0,0,0.085)"/><g fill="rgba(170,170,170,0.17)"><circle cx="4.5" cy="-12.5" r="2.9"/><circle cx="10" cy="-15.6" r="2.9"/><circle cx="14.6" cy="-11" r="2.9"/><circle cx="9.4" cy="-9.6" r="2.6"/><path d="M12 3.5 a9.6 9.6 0 1 1 3.5 15.5 a14 14 0 0 0 -3.5 -15.5 z"/></g><path d="M18 2.6 q4 7 -1 15.5 M23.5 3.6 q3 7 -2 15" fill="none" stroke="rgba(0,0,0,0.09)" stroke-width="0.9"/><path d="M-8.2 -3.6 l1.4 5.4" stroke="rgba(210,210,210,0.22)" stroke-width="1.6" stroke-linecap="round"/><circle cx="-5.8" cy="4.6" r="0.9" fill="rgba(210,210,210,0.22)"/><g transform="rotate(24)" fill="rgba(78,78,78,0.15)" font-family="Liberation Sans,Noto Sans CJK SC,sans-serif" font-weight="900" font-style="italic"><text x="-28" y="33.6" font-size="14.2" letter-spacing="0.5">杭州水果捞</text><text x="-25.6" y="45.2" font-size="10" letter-spacing="3.1">HZFRUIT</text></g></g>
<g transform="translate(652.2,377)"><circle cx="0" cy="0" r="14" fill="rgba(0,0,0,0.085)"/><g fill="rgba(170,170,170,0.17)"><circle cx="4.5" cy="-12.5" r="2.9"/><circle cx="10" cy="-15.6" r="2.9"/><circle cx="14.6" cy="-11" r="2.9"/><circle cx="9.4" cy="-9.6" r="2.6"/><path d="M12 3.5 a9.6 9.6 0 1 1 3.5 15.5 a14 14 0 0 0 -3.5 -15.5 z"/></g><path d="M18 2.6 q4 7 -1 15.5 M23.5 3.6 q3 7 -2 15" fill="none" stroke="rgba(0,0,0,0.09)" stroke-width="0.9"/><path d="M-8.2 -3.6 l1.4 5.4" stroke="rgba(210,210,210,0.22)" stroke-width="1.6" stroke-linecap="round"/><circle cx="-5.8" cy="4.6" r="0.9" fill="rgba(210,210,210,0.22)"/><g transform="rotate(24)" fill="rgba(78,78,78,0.15)" font-family="Liberation Sans,Noto Sans CJK SC,sans-serif" font-weight="900" font-style="italic"><text x="-28" y="33.6" font-size="14.2" letter-spacing="0.5">杭州水果捞</text><text x="-25.6" y="45.2" font-size="10" letter-spacing="3.1">HZFRUIT</text></g></g>
<g transform="translate(797.0,377)"><circle cx="0" cy="0" r="14" fill="rgba(0,0,0,0.085)"/><g fill="rgba(170,170,170,0.17)"><circle cx="4.5" cy="-12.5" r="2.9"/><circle cx="10" cy="-15.6" r="2.9"/><circle cx="14.6" cy="-11" r="2.9"/><circle cx="9.4" cy="-9.6" r="2.6"/><path d="M12 3.5 a9.6 9.6 0 1 1 3.5 15.5 a14 14 0 0 0 -3.5 -15.5 z"/></g><path d="M18 2.6 q4 7 -1 15.5 M23.5 3.6 q3 7 -2 15" fill="none" stroke="rgba(0,0,0,0.09)" stroke-width="0.9"/><path d="M-8.2 -3.6 l1.4 5.4" stroke="rgba(210,210,210,0.22)" stroke-width="1.6" stroke-linecap="round"/><circle cx="-5.8" cy="4.6" r="0.9" fill="rgba(210,210,210,0.22)"/><g transform="rotate(24)" fill="rgba(78,78,78,0.15)" font-family="Liberation Sans,Noto Sans CJK SC,sans-serif" font-weight="900" font-style="italic"><text x="-28" y="33.6" font-size="14.2" letter-spacing="0.5">杭州水果捞</text><text x="-25.6" y="45.2" font-size="10" letter-spacing="3.1">HZFRUIT</text></g></g>
<g transform="translate(941.8,377)"><circle cx="0" cy="0" r="14" fill="rgba(0,0,0,0.085)"/><g fill="rgba(170,170,170,0.17)"><circle cx="4.5" cy="-12.5" r="2.9"/><circle cx="10" cy="-15.6" r="2.9"/><circle cx="14.6" cy="-11" r="2.9"/><circle cx="9.4" cy="-9.6" r="2.6"/><path d="M12 3.5 a9.6 9.6 0 1 1 3.5 15.5 a14 14 0 0 0 -3.5 -15.5 z"/></g><path d="M18 2.6 q4 7 -1 15.5 M23.5 3.6 q3 7 -2 15" fill="none" stroke="rgba(0,0,0,0.09)" stroke-width="0.9"/><path d="M-8.2 -3.6 l1.4 5.4" stroke="rgba(210,210,210,0.22)" stroke-width="1.6" stroke-linecap="round"/><circle cx="-5.8" cy="4.6" r="0.9" fill="rgba(210,210,210,0.22)"/><g transform="rotate(24)" fill="rgba(78,78,78,0.15)" font-family="Liberation Sans,Noto Sans CJK SC,sans-serif" font-weight="900" font-style="italic"><text x="-28" y="33.6" font-size="14.2" letter-spacing="0.5">杭州水果捞</text><text x="-25.6" y="45.2" font-size="10" letter-spacing="3.1">HZFRUIT</text></g></g>
<g transform="translate(36.0,499)"><circle cx="0" cy="0" r="14" fill="rgba(0,0,0,0.085)"/><g fill="rgba(170,170,170,0.17)"><circle cx="4.5" cy="-12.5" r="2.9"/><circle cx="10" cy="-15.6" r="2.9"/><circle cx="14.6" cy="-11" r="2.9"/><circle cx="9.4" cy="-9.6" r="2.6"/><path d="M12 3.5 a9.6 9.6 0 1 1 3.5 15.5 a14 14 0 0 0 -3.5 -15.5 z"/></g><path d="M18 2.6 q4 7 -1 15.5 M23.5 3.6 q3 7 -2 15" fill="none" stroke="rgba(0,0,0,0.09)" stroke-width="0.9"/><path d="M-8.2 -3.6 l1.4 5.4" stroke="rgba(210,210,210,0.22)" stroke-width="1.6" stroke-linecap="round"/><circle cx="-5.8" cy="4.6" r="0.9" fill="rgba(210,210,210,0.22)"/><g transform="rotate(24)" fill="rgba(78,78,78,0.15)" font-family="Liberation Sans,Noto Sans CJK SC,sans-serif" font-weight="900" font-style="italic"><text x="-28" y="33.6" font-size="14.2" letter-spacing="0.5">杭州水果捞</text><text x="-25.6" y="45.2" font-size="10" letter-spacing="3.1">HZFRUIT</text></g></g>
<g transform="translate(180.8,499)"><circle cx="0" cy="0" r="14" fill="rgba(0,0,0,0.085)"/><g fill="rgba(170,170,170,0.17)"><circle cx="4.5" cy="-12.5" r="2.9"/><circle cx="10" cy="-15.6" r="2.9"/><circle cx="14.6" cy="-11" r="2.9"/><circle cx="9.4" cy="-9.6" r="2.6"/><path d="M12 3.5 a9.6 9.6 0 1 1 3.5 15.5 a14 14 0 0 0 -3.5 -15.5 z"/></g><path d="M18 2.6 q4 7 -1 15.5 M23.5 3.6 q3 7 -2 15" fill="none" stroke="rgba(0,0,0,0.09)" stroke-width="0.9"/><path d="M-8.2 -3.6 l1.4 5.4" stroke="rgba(210,210,210,0.22)" stroke-width="1.6" stroke-linecap="round"/><circle cx="-5.8" cy="4.6" r="0.9" fill="rgba(210,210,210,0.22)"/><g transform="rotate(24)" fill="rgba(78,78,78,0.15)" font-family="Liberation Sans,Noto Sans CJK SC,sans-serif" font-weight="900" font-style="italic"><text x="-28" y="33.6" font-size="14.2" letter-spacing="0.5">杭州水果捞</text><text x="-25.6" y="45.2" font-size="10" letter-spacing="3.1">HZFRUIT</text></g></g>
<g transform="translate(325.6,499)"><circle cx="0" cy="0" r="14" fill="rgba(0,0,0,0.085)"/><g fill="rgba(170,170,170,0.17)"><circle cx="4.5" cy="-12.5" r="2.9"/><circle cx="10" cy="-15.6" r="2.9"/><circle cx="14.6" cy="-11" r="2.9"/><circle cx="9.4" cy="-9.6" r="2.6"/><path d="M12 3.5 a9.6 9.6 0 1 1 3.5 15.5 a14 14 0 0 0 -3.5 -15.5 z"/></g><path d="M18 2.6 q4 7 -1 15.5 M23.5 3.6 q3 7 -2 15" fill="none" stroke="rgba(0,0,0,0.09)" stroke-width="0.9"/><path d="M-8.2 -3.6 l1.4 5.4" stroke="rgba(210,210,210,0.22)" stroke-width="1.6" stroke-linecap="round"/><circle cx="-5.8" cy="4.6" r="0.9" fill="rgba(210,210,210,0.22)"/><g transform="rotate(24)" fill="rgba(78,78,78,0.15)" font-family="Liberation Sans,Noto Sans CJK SC,sans-serif" font-weight="900" font-style="italic"><text x="-28" y="33.6" font-size="14.2" letter-spacing="0.5">杭州水果捞</text><text x="-25.6" y="45.2" font-size="10" letter-spacing="3.1">HZFRUIT</text></g></g>
<g transform="translate(470.4,499)"><circle cx="0" cy="0" r="14" fill="rgba(0,0,0,0.085)"/><g fill="rgba(170,170,170,0.17)"><circle cx="4.5" cy="-12.5" r="2.9"/><circle cx="10" cy="-15.6" r="2.9"/><circle cx="14.6" cy="-11" r="2.9"/><circle cx="9.4" cy="-9.6" r="2.6"/><path d="M12 3.5 a9.6 9.6 0 1 1 3.5 15.5 a14 14 0 0 0 -3.5 -15.5 z"/></g><path d="M18 2.6 q4 7 -1 15.5 M23.5 3.6 q3 7 -2 15" fill="none" stroke="rgba(0,0,0,0.09)" stroke-width="0.9"/><path d="M-8.2 -3.6 l1.4 5.4" stroke="rgba(210,210,210,0.22)" stroke-width="1.6" stroke-linecap="round"/><circle cx="-5.8" cy="4.6" r="0.9" fill="rgba(210,210,210,0.22)"/><g transform="rotate(24)" fill="rgba(78,78,78,0.15)" font-family="Liberation Sans,Noto Sans CJK SC,sans-serif" font-weight="900" font-style="italic"><text x="-28" y="33.6" font-size="14.2" letter-spacing="0.5">杭州水果捞</text><text x="-25.6" y="45.2" font-size="10" letter-spacing="3.1">HZFRUIT</text></g></g>
<g transform="translate(615.2,499)"><circle cx="0" cy="0" r="14" fill="rgba(0,0,0,0.085)"/><g fill="rgba(170,170,170,0.17)"><circle cx="4.5" cy="-12.5" r="2.9"/><circle cx="10" cy="-15.6" r="2.9"/><circle cx="14.6" cy="-11" r="2.9"/><circle cx="9.4" cy="-9.6" r="2.6"/><path d="M12 3.5 a9.6 9.6 0 1 1 3.5 15.5 a14 14 0 0 0 -3.5 -15.5 z"/></g><path d="M18 2.6 q4 7 -1 15.5 M23.5 3.6 q3 7 -2 15" fill="none" stroke="rgba(0,0,0,0.09)" stroke-width="0.9"/><path d="M-8.2 -3.6 l1.4 5.4" stroke="rgba(210,210,210,0.22)" stroke-width="1.6" stroke-linecap="round"/><circle cx="-5.8" cy="4.6" r="0.9" fill="rgba(210,210,210,0.22)"/><g transform="rotate(24)" fill="rgba(78,78,78,0.15)" font-family="Liberation Sans,Noto Sans CJK SC,sans-serif" font-weight="900" font-style="italic"><text x="-28" y="33.6" font-size="14.2" letter-spacing="0.5">杭州水果捞</text><text x="-25.6" y="45.2" font-size="10" letter-spacing="3.1">HZFRUIT</text></g></g>
<g transform="translate(760.0,499)"><circle cx="0" cy="0" r="14" fill="rgba(0,0,0,0.085)"/><g fill="rgba(170,170,170,0.17)"><circle cx="4.5" cy="-12.5" r="2.9"/><circle cx="10" cy="-15.6" r="2.9"/><circle cx="14.6" cy="-11" r="2.9"/><circle cx="9.4" cy="-9.6" r="2.6"/><path d="M12 3.5 a9.6 9.6 0 1 1 3.5 15.5 a14 14 0 0 0 -3.5 -15.5 z"/></g><path d="M18 2.6 q4 7 -1 15.5 M23.5 3.6 q3 7 -2 15" fill="none" stroke="rgba(0,0,0,0.09)" stroke-width="0.9"/><path d="M-8.2 -3.6 l1.4 5.4" stroke="rgba(210,210,210,0.22)" stroke-width="1.6" stroke-linecap="round"/><circle cx="-5.8" cy="4.6" r="0.9" fill="rgba(210,210,210,0.22)"/><g transform="rotate(24)" fill="rgba(78,78,78,0.15)" font-family="Liberation Sans,Noto Sans CJK SC,sans-serif" font-weight="900" font-style="italic"><text x="-28" y="33.6" font-size="14.2" letter-spacing="0.5">杭州水果捞</text><text x="-25.6" y="45.2" font-size="10" letter-spacing="3.1">HZFRUIT</text></g></g>
<g transform="translate(904.8,499)"><circle cx="0" cy="0" r="14" fill="rgba(0,0,0,0.085)"/><g fill="rgba(170,170,170,0.17)"><circle cx="4.5" cy="-12.5" r="2.9"/><circle cx="10" cy="-15.6" r="2.9"/><circle cx="14.6" cy="-11" r="2.9"/><circle cx="9.4" cy="-9.6" r="2.6"/><path d="M12 3.5 a9.6 9.6 0 1 1 3.5 15.5 a14 14 0 0 0 -3.5 -15.5 z"/></g><path d="M18 2.6 q4 7 -1 15.5 M23.5 3.6 q3 7 -2 15" fill="none" stroke="rgba(0,0,0,0.09)" stroke-width="0.9"/><path d="M-8.2 -3.6 l1.4 5.4" stroke="rgba(210,210,210,0.22)" stroke-width="1.6" stroke-linecap="round"/><circle cx="-5.8" cy="4.6" r="0.9" fill="rgba(210,210,210,0.22)"/><g transform="rotate(24)" fill="rgba(78,78,78,0.15)" font-family="Liberation Sans,Noto Sans CJK SC,sans-serif" font-weight="900" font-style="italic"><text x="-28" y="33.6" font-size="14.2" letter-spacing="0.5">杭州水果捞</text><text x="-25.6" y="45.2" font-size="10" letter-spacing="3.1">HZFRUIT</text></g></g>
<g transform="translate(1049.6,499)"><circle cx="0" cy="0" r="14" fill="rgba(0,0,0,0.085)"/><g fill="rgba(170,170,170,0.17)"><circle cx="4.5" cy="-12.5" r="2.9"/><circle cx="10" cy="-15.6" r="2.9"/><circle cx="14.6" cy="-11" r="2.9"/><circle cx="9.4" cy="-9.6" r="2.6"/><path d="M12 3.5 a9.6 9.6 0 1 1 3.5 15.5 a14 14 0 0 0 -3.5 -15.5 z"/></g><path d="M18 2.6 q4 7 -1 15.5 M23.5 3.6 q3 7 -2 15" fill="none" stroke="rgba(0,0,0,0.09)" stroke-width="0.9"/><path d="M-8.2 -3.6 l1.4 5.4" stroke="rgba(210,210,210,0.22)" stroke-width="1.6" stroke-linecap="round"/><circle cx="-5.8" cy="4.6" r="0.9" fill="rgba(210,210,210,0.22)"/><g transform="rotate(24)" fill="rgba(78,78,78,0.15)" font-family="Liberation Sans,Noto Sans CJK SC,sans-serif" font-weight="900" font-style="italic"><text x="-28" y="33.6" font-size="14.2" letter-spacing="0.5">杭州水果捞</text><text x="-25.6" y="45.2" font-size="10" letter-spacing="3.1">HZFRUIT</text></g></g>
</svg>
</div>
</body>
</html>
